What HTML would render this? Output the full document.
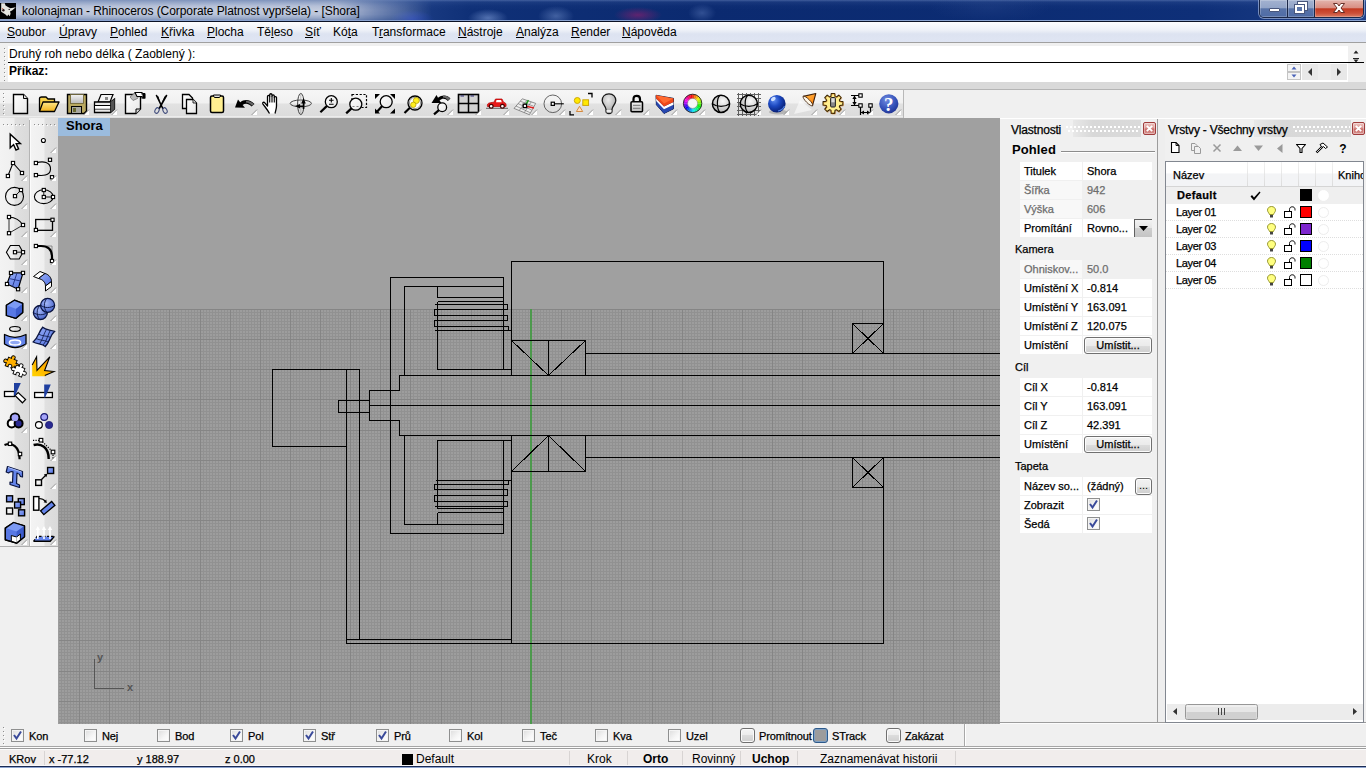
<!DOCTYPE html><html lang="cs"><head><meta charset="utf-8"><title>kolonajman - Rhinoceros</title><style>
html,body{margin:0;padding:0}
body{width:1366px;height:768px;overflow:hidden;position:relative;background:#f0f0f0;font-family:"Liberation Sans",sans-serif;font-size:12px;color:#000}
div,span,svg,i{position:absolute;box-sizing:border-box}
u{text-decoration:underline;text-underline-offset:1px}
/* title */
#titlebar{left:0;top:0;width:1366px;height:22px;background:radial-gradient(ellipse 22px 9px at 412px 19px,rgba(40,70,190,.75),rgba(40,70,190,0)),radial-gradient(ellipse 20px 9px at 488px 18px,rgba(110,140,200,.7),rgba(110,140,200,0)),radial-gradient(ellipse 18px 10px at 556px 16px,rgba(100,130,190,.6),rgba(100,130,190,0)),radial-gradient(ellipse 24px 8px at 638px 15px,rgba(150,30,110,.6),rgba(150,30,110,0)),radial-gradient(ellipse 14px 9px at 702px 13px,rgba(80,110,175,.55),rgba(80,110,175,0)),radial-gradient(ellipse 60px 14px at 990px 8px,rgba(40,70,140,.35),rgba(40,70,140,0)),linear-gradient(90deg,#3a5796 0,#1e3f86 400px,#0f3077 470px,#0b2a70 700px,#0c2c73 1000px,#0e2f78 1200px,#1f4088 1366px);overflow:hidden}
#titlebar:before{content:"";position:absolute;left:0;top:0;width:1366px;height:20px;background:linear-gradient(rgba(150,175,225,.38) 0,rgba(120,150,210,.12) 2px,rgba(90,120,190,.04) 6px,rgba(0,0,0,0) 10px)}
#titlebar:after{content:"";position:absolute;left:0;top:20px;width:1366px;height:2px;background:linear-gradient(#8aa3d0 0,#8aa3d0 50%,#0b1226 50%,#0b1226 100%)}
.tglow{left:0;top:0;width:440px;height:20px;background:linear-gradient(#7f93bc 0,#96a7c8 12%,#b5c0d8 30%,#c4ccde 50%,#bac4da 72%,#9babc9 90%,#8396bc 100%);-webkit-mask-image:linear-gradient(90deg,#000 0,#000 335px,rgba(0,0,0,.55) 375px,transparent 432px);mask-image:linear-gradient(90deg,#000 0,#000 335px,rgba(0,0,0,.55) 375px,transparent 432px)}
.appico{left:0;top:3px}
.ttext{left:22px;top:4px;font-size:12px;line-height:15px;white-space:nowrap;color:#000;letter-spacing:-0.06px}
.wbtns{left:1259px;top:0;width:105px;height:18px;border:1px solid #1a2748;border-top:none;border-radius:0 0 5px 5px;background:#1d3a7c;overflow:hidden;box-shadow:0 0 0 1px rgba(185,200,232,.6)}
.wb{top:0;height:17px}
.wmin{left:0;width:28px;background:linear-gradient(#a3b2d0 0,#93a5c8 45%,#5873a8 52%,#4f6ca6 100%);border-right:1px solid #1a2748;box-shadow:inset 0 0 0 1px rgba(255,255,255,.22)}
.wmin i{left:9px;top:8px;width:11px;height:4px;background:#fff;border:1px solid #48567c;border-radius:1px}
.wmax{left:28px;width:27px;background:linear-gradient(#a3b2d0 0,#93a5c8 45%,#5873a8 52%,#4f6ca6 100%);border-right:1px solid #1a2748;box-shadow:inset 0 0 0 1px rgba(255,255,255,.22)}
.wmax i.a{left:10px;top:2px;width:9px;height:8px;border:2px solid #fff;outline:1px solid #48567c}
.wmax i.b{left:7px;top:5px;width:9px;height:8px;border:2px solid #fff;outline:1px solid #48567c;background:#5a75aa}
.wclose{left:55px;width:49px;background:linear-gradient(#e3b5ad 0,#d98f83 45%,#c33a22 52%,#cc4f38 78%,#d97d66 100%);box-shadow:inset 0 0 0 1px rgba(255,255,255,.22)}
.wclose svg{left:17px;top:2px}
/* menu */
#menubar{left:0;top:22px;width:1366px;height:20px;background:linear-gradient(#fdfdfe 0,#eef1f8 40%,#dde3f1 60%,#dfe5f3 100%)}
.mi{top:3px;font-size:12px;line-height:15px;white-space:nowrap}
#menubar:after{content:"";position:absolute;left:0;top:20px;width:1366px;height:1px;background:#a0a0a0}
/* command */
#cmd{left:0;top:43px;width:1366px;height:39px;background:#f0f0f0}
#cmd:before{content:"";position:absolute;left:8px;top:3px;width:1340px;height:36px;background:#fff}
.cgrip{left:4px;top:5px;width:3px;height:33px;background:repeating-linear-gradient(#8e8e8e 0,#8e8e8e 1px,transparent 1px,transparent 4px) 0 0/1px 100% no-repeat,repeating-linear-gradient(transparent 0,transparent 1px,#fff 1px,#fff 2px,transparent 2px,transparent 4px) 1px 0/1px 100% no-repeat}
.chist{left:9px;top:4px;line-height:15px;white-space:nowrap;font-size:12px;letter-spacing:.03px}
.cline{left:8px;top:19px;width:1356px;height:1px;background:#000;z-index:3}
.cprompt{left:9px;top:21px;line-height:15px;font-weight:bold;font-size:12px}
.cscroll{left:1348px;top:3px;width:16px;height:17px;background:#f0f0f0}
.cspin{left:1287px;top:21px}
.carrows{left:1302px;top:21px}
#band{left:0;top:82px;width:1366px;height:8px;background:#d9d9d9;border-bottom:1px solid #b4b4b4}
/* top toolbar */
#toptb{left:0;top:90px;width:1366px;height:28px;background:#f0f0f0}
#toptb:before{content:"";position:absolute;left:0;top:0;width:903px;height:28px;background:linear-gradient(#f6f6f6 0,#f1f1f1 46%,#e2e2e2 50%,#dcdcdc 92%,#f4f4f4 96%,#cfcfcf 100%);border-right:1px solid #b8b8b8}
.tgripv{left:3px;top:3px;width:3px;height:22px;background:repeating-linear-gradient(#8e8e8e 0,#8e8e8e 1px,transparent 1px,transparent 4px) 0 0/1px 100% no-repeat,repeating-linear-gradient(transparent 0,transparent 1px,#fff 1px,#fff 2px,transparent 2px,transparent 4px) 1px 0/1px 100% no-repeat}
.ti{overflow:visible}
/* left toolbars */
#lefttb{left:0;top:118px;width:58px;height:606px;background:#f0f0f0}
.lc{top:0;height:429px;width:29px;background:linear-gradient(90deg,#f3f3f3 0,#efefef 48%,#e0e0e0 52%,#dadada 100%);border-bottom:1px solid #b0b0b0}
.lc1{left:0}.lc2{left:31px;width:27px}
.lsep{left:29px;top:2px;width:2px;height:427px;background:linear-gradient(90deg,#b4b4b4 0,#b4b4b4 50%,#fcfcfc 50%,#fcfcfc 100%)}
.lgrip{left:3px;top:6px;width:24px;height:3px;background:repeating-linear-gradient(90deg,#8e8e8e 0,#8e8e8e 1px,transparent 1px,transparent 4px) 0 0/100% 1px no-repeat,repeating-linear-gradient(90deg,transparent 0,transparent 1px,#fff 1px,#fff 2px,transparent 2px,transparent 4px) 0 1px/100% 1px no-repeat}
#lefttb:after{content:"";position:absolute;left:0;top:428px;width:58px;height:1px;background:#b0b0b0}
/* viewport */
#vp{left:58px;top:118px;width:942px;height:606px;background:#a0a0a0;overflow:hidden}
#vp svg{left:0;top:0}
.vtitle{left:0;top:0;width:52px;height:18px;background:#9bbcde;font-weight:bold;font-size:13px;line-height:16px;padding-left:8px}
.axl{font-size:11px;font-weight:bold;color:#555;line-height:12px}
/* osnap */
#osnap{left:0;top:724px;width:1366px;height:22px;background:#f0f0f0}
.ogrip{left:3px;top:3px;width:3px;height:18px;background:repeating-linear-gradient(#8e8e8e 0,#8e8e8e 1px,transparent 1px,transparent 4px) 0 0/1px 100% no-repeat,repeating-linear-gradient(transparent 0,transparent 1px,#fff 1px,#fff 2px,transparent 2px,transparent 4px) 1px 0/1px 100% no-repeat}
.cb{width:13px;height:13px;border:1px solid #8e8f8f;background:linear-gradient(135deg,#dcdcdc 0,#f6f6f6 60%,#fff 100%);box-shadow:inset 0 0 0 1px #f4f4f4}
.cb svg{left:0;top:0}
.ol{top:5px;line-height:14px;font-size:11px;white-space:nowrap;letter-spacing:-0.1px}
.pb{top:4px;width:15px;height:15px;border:1px solid #707070;border-radius:3px;background:linear-gradient(#f4f4f4 0,#ebebeb 50%,#dcdcdc 50%,#cfcfcf 100%);box-shadow:inset 0 0 0 1px #fafafa}
.pb.on{background:#9c9c9c;border-color:#2c5a8c;box-shadow:inset 0 0 0 1px #7ea0c4}
.oend{left:964px;top:0;width:2px;height:22px;background:linear-gradient(90deg,#a8a8a8 0,#a8a8a8 50%,#fff 50%,#fff 100%)}
/* status */
#status{left:0;top:746px;width:1366px;height:20px;background:#f1edec;border-top:1px solid #a6a6a6}
#status:before{content:"";position:absolute;left:0;top:0;width:1366px;height:3px;background:linear-gradient(#fdfdfd 0,#fdfdfd 33.3%,#9c9c9c 33.3%,#9c9c9c 66.6%,#fbfbfb 66.6%,#fbfbfb 100%)}
.sp{top:5px;line-height:14px;font-size:12px;white-space:nowrap}
.sp.b{font-weight:bold}.sp.n{font-size:11px}
.ssep{top:4px;width:1px;height:15px;background:#d8d4d3}
.sblk{left:402px;top:7px;width:11px;height:12px;background:#000}
#botline{left:0;top:765px;width:1366px;height:3px;background:linear-gradient(#faf8f8 0,#faf8f8 33.3%,#1b2b54 33.3%,#1b2b54 66.6%,#8ea4cf 66.6%,#8ea4cf 100%)}
/* panels */
#props{left:1000px;top:118px;width:158px;height:606px;background:#f0f0f0;box-shadow:inset 0 1px 0 #fff,inset 0 -1px 0 #fcfcfc,inset 0 -2px 0 #9c9c9c,inset -1px 0 0 #9c9c9c;font-size:11px}
.ptitle{left:11px;top:5px;z-index:2;line-height:14px;font-size:12px;white-space:nowrap;letter-spacing:-0.2px}
.pgripbg{top:2px;height:17px;background:linear-gradient(90deg,#e8e8e8,#d8d8d8 30%,#dadada)}
.pgrip{top:8px;height:7px;background:repeating-linear-gradient(90deg,#fff 0,#fff 2px,transparent 2px,transparent 4px) 0 0/100% 2px no-repeat,repeating-linear-gradient(90deg,transparent 0,transparent 2px,#fff 2px,#fff 4px) 0 4px/100% 2px no-repeat}
.pclose{top:4px;width:13px;height:13px;border:1px solid #a03c3c;border-radius:2px;background:linear-gradient(#eec4c0 0,#dc9a96 45%,#c96a66 55%,#d89490 100%);box-shadow:inset 0 0 0 1px rgba(255,255,255,.35)}
.pclose svg{left:2px;top:2px}
.phead{left:12px;top:24px;font-weight:bold;font-size:13px;line-height:16px;letter-spacing:.1px}
.pheadline{left:61px;top:33px;width:94px;height:2px;background:linear-gradient(#8c8c8c 0,#8c8c8c 50%,#fff 50%,#fff 100%)}
.gname{left:15px;line-height:19px;font-size:11px;white-space:nowrap}
.prow{left:20px;width:132px;height:18px}
.pl{left:0;top:0;width:62px;height:18px;background:#fff;padding-left:4px;line-height:18px;white-space:nowrap;overflow:hidden}
.pv{left:63px;top:0;width:69px;height:18px;background:#fff;white-space:nowrap}
.pvt{left:4px;top:0;line-height:18px}
.prow.dis .pl{background:#f8f8f8;color:#6d6d6d}
.prow.dis .pv{background:#f0f0f0;color:#6d6d6d}
.dd{left:51px;top:0;width:18px;height:18px;border-top:1px solid #606060;border-left:1px solid #606060;background:linear-gradient(#f2f2f2 0,#e4e4e4 50%,#cfcfcf 50%,#c4c4c4 100%)}
.dd svg{left:4px;top:6px}
.pbtn{left:1px;top:1px;width:68px;height:17px;border:1px solid #707070;border-radius:3px;background:linear-gradient(#f2f2f2 0,#ebebeb 50%,#dddddd 50%,#cfcfcf 100%);box-shadow:inset 0 0 0 1px #fcfcfc;text-align:center;line-height:15px}
.pdots{left:52px;top:1px;width:17px;height:17px;border:1px solid #707070;border-radius:3px;background:linear-gradient(#f2f2f2 0,#ebebeb 50%,#dddddd 50%,#cfcfcf 100%);box-shadow:inset 0 0 0 1px #fcfcfc;text-align:center;line-height:13px}
#split{left:1158px;top:118px;width:7px;height:606px;background:#eeeeee;box-shadow:inset 0 1px 0 #fff,inset 0 -1px 0 #fcfcfc,inset 0 -2px 0 #9c9c9c}
#layers{left:1165px;top:118px;width:201px;height:606px;background:#f0f0f0;box-shadow:inset 0 1px 0 #fff,inset 0 -1px 0 #fcfcfc,inset 0 -2px 0 #9c9c9c;font-size:11px}
.ltb{left:0;top:22px}
.lbox{left:0;top:43px;width:199px;height:562px;border:1px solid #828790;background:#fff;overflow:hidden}
.lhdr{left:0;top:0;width:197px;height:25px;background:linear-gradient(#fff 0,#fff 45%,#f3f4f6 50%,#f3f4f6 100%);border-bottom:1px solid #d5d5d5}
.hsep{top:0;width:1px;height:24px;background:linear-gradient(#f2f2f2,#dcdcdc)}
.hl{top:6px;line-height:14px;white-space:nowrap}
.lrow{left:0;width:197px;height:17px;border-bottom:1px dotted #dedede}
.lrow.cur{background:#efefef;font-weight:bold;border-bottom:none}
.ln{left:10px;top:1px;line-height:15px;white-space:nowrap;letter-spacing:-0.35px}
.lrow.cur .ln{left:11px;letter-spacing:.35px}
.lck{left:84px;top:4px}
.lbulb{left:101px;top:2px}
.llock{left:118px;top:2px}
.sw{left:134px;top:2px;width:12px;height:12px;border:1px solid #000}
.mat{left:152px;top:3px;width:11px;height:11px;border-radius:6px;background:#fff;border:1px solid #ededed}
.mat.cur{border-color:#fff}
.hscroll{left:1px;top:542px;width:196px;height:16px;background:#ececec}
.ol,.pl,.pvt,.ln,.hl,.gname,.sp.n,.pbtn,.ptitle{-webkit-text-stroke:0.25px currentColor}

</style></head><body>
<svg width="0" height="0" style="position:absolute"><defs>
<linearGradient id="gFold" x1="0" y1="0" x2="0" y2="1"><stop offset="0" stop-color="#ffe88a"/><stop offset="1" stop-color="#f2b21c"/></linearGradient>
<linearGradient id="gGray" x1="0" y1="0" x2="0" y2="1"><stop offset="0" stop-color="#f4f4f4"/><stop offset="1" stop-color="#b8b8b8"/></linearGradient>
<linearGradient id="gDoc" x1="0" y1="0" x2="1" y2="1"><stop offset="0" stop-color="#fff"/><stop offset="1" stop-color="#e6e6e6"/></linearGradient>
<radialGradient id="gSph" cx="0.6" cy="0.35" r="0.7"><stop offset="0" stop-color="#fafafa"/><stop offset="1" stop-color="#b4b4b4"/></radialGradient>
<radialGradient id="gBulb" cx="0.45" cy="0.3" r="0.65"><stop offset="0" stop-color="#ececec"/><stop offset="0.6" stop-color="#c4c4c4"/><stop offset="1" stop-color="#9a9a9a"/></radialGradient>
<radialGradient id="gBall" cx="0.35" cy="0.3" r="0.75"><stop offset="0" stop-color="#5f8cf0"/><stop offset="0.45" stop-color="#1c48c0"/><stop offset="1" stop-color="#04186a"/></radialGradient>
<radialGradient id="gHelp" cx="0.4" cy="0.3" r="0.8"><stop offset="0" stop-color="#6f8be0"/><stop offset="0.6" stop-color="#3450b8"/><stop offset="1" stop-color="#1c2c88"/></radialGradient>
<radialGradient id="gBS" cx="0.4" cy="0.35" r="0.7"><stop offset="0" stop-color="#a4b8f8"/><stop offset="1" stop-color="#4460c8"/></radialGradient>
<linearGradient id="gBlue" x1="0" y1="0" x2="1" y2="1"><stop offset="0" stop-color="#9ab0f8"/><stop offset="1" stop-color="#5070e0"/></linearGradient>
<linearGradient id="gExp" x1="1" y1="0" x2="0" y2="1"><stop offset="0" stop-color="#ff9000"/><stop offset="1" stop-color="#ffd400"/></linearGradient>
<linearGradient id="gCone" x1="0" y1="0" x2="1" y2="1"><stop offset="0" stop-color="#ffc050"/><stop offset="1" stop-color="#ff7800"/></linearGradient>
</defs></svg>
<div id="titlebar"><div class="tglow"></div>
<svg class="appico" width="16" height="16" viewBox="0 0 16 16"><rect width="16" height="16" fill="#000"/><path d="M1.2 0.3L4.8 0.3L5.5 2.5L8 4L10.5 5.2L15.8 4.2L12 7.5L10 8.5L10.6 10.5L9.8 13.2L8.3 11.5L7.2 13.2L5.8 11.8L4 10.5L1.2 8.8Z" fill="#e6e6e0"/><circle cx="3.4" cy="7.2" r="1.2" fill="#2a1616"/><circle cx="2.6" cy="5.6" r="0.7" fill="#d06a50"/><circle cx="9.2" cy="6.4" r="0.7" fill="#1a1010"/></svg>
<span class="ttext">kolonajman - Rhinoceros (Corporate Platnost vypršela) - [Shora]</span>
<div class="wbtns"><div class="wb wmin"><i></i></div><div class="wb wmax"><i class="a"></i><i class="b"></i></div><div class="wb wclose"><svg width="14" height="12" viewBox="0 0 14 12"><path d="M1.5 1.5 L5.2 1.5 L7 4 L8.8 1.5 L12.5 1.5 L9 6 L12.5 10.5 L8.8 10.5 L7 8 L5.2 10.5 L1.5 10.5 L5 6 Z" fill="#fff" stroke="#5a2018" stroke-width="0.9"/></svg></div></div>
</div>
<div id="menubar">
<span class="mi" style="left:7px"><u>S</u>oubor</span>
<span class="mi" style="left:59px"><u>Ú</u>pravy</span>
<span class="mi" style="left:110px"><u>P</u>ohled</span>
<span class="mi" style="left:161px"><u>K</u>řivka</span>
<span class="mi" style="left:207px"><u>P</u>locha</span>
<span class="mi" style="left:257px">Tě<u>l</u>eso</span>
<span class="mi" style="left:305px"><u>S</u>íť</span>
<span class="mi" style="left:333px">Kó<u>t</u>a</span>
<span class="mi" style="left:372px">T<u>r</u>ansformace</span>
<span class="mi" style="left:458px"><u>N</u>ástroje</span>
<span class="mi" style="left:516px"><u>A</u>nalýza</span>
<span class="mi" style="left:571px"><u>R</u>ender</span>
<span class="mi" style="left:622px"><u>N</u>ápověda</span>
</div>
<div id="cmd"><div class="cgrip"></div><div class="chist">Druhý roh nebo délka ( Zaoblený ):</div><div class="cline"></div><div class="cprompt">Příkaz:</div>
<div class="cscroll"><svg width="16" height="17" viewBox="0 3 16 17"><path d="M5.5 10.5 L8 7.5 L10.5 10.5Z" fill="#222"/><path d="M5.5 16.5 L10.5 16.5 L8 19.5Z" fill="#222"/><rect x="5" y="15" width="6" height="1" fill="#222"/></svg></div>
<div class="cspin"><svg width="14" height="16" viewBox="0 0 14 16"><rect x="0.5" y="0.5" width="13" height="7" fill="#f4f4f4" stroke="#c4c4c4"/><rect x="0.5" y="8.5" width="13" height="7" fill="#f4f4f4" stroke="#c4c4c4"/><path d="M4.5 5.5 L7 2.5 L9.5 5.5Z" fill="#4a63b8"/><path d="M4.5 10.5 L9.5 10.5 L7 13.5Z" fill="#4a63b8"/></svg></div>
<div class="carrows"><svg width="46" height="16" viewBox="0 0 46 16"><rect x="0" y="0" width="45" height="16" fill="#e8e8e8"/><rect x="16" y="0" width="13" height="16" fill="#ededed"/><path d="M10 4 L6 8 L10 12Z" fill="#333"/><path d="M35 4 L39 8 L35 12Z" fill="#333"/></svg></div>
</div>
<div id="band"></div>
<div id="toptb"><div class="tgripv"></div>
<svg class="ti" style="left:8px;top:2px" width="24" height="24" viewBox="0 0 24 24"><path d="M5.5 2.5H15.5L19.5 6.5V21.5H5.5Z" fill="url(#gDoc)" stroke="#000" stroke-width="1.4"/><path d="M15.5 2.5V6.5H19.5" fill="#ddd" stroke="#000" stroke-width="1"/></svg>
<svg class="ti" style="left:36px;top:2px" width="24" height="24" viewBox="0 0 24 24"><path d="M3.5 19V6.5C3.5 5.5 4.5 5 5.5 5H10L12 7H18.5V10" fill="#f8d24a" stroke="#000" stroke-width="1.3"/><path d="M3.5 19.5L7 10H23L18.5 19.5Z" fill="url(#gFold)" stroke="#000" stroke-width="1.3" stroke-linejoin="round"/></svg>
<svg class="ti" style="left:64px;top:2px" width="24" height="24" viewBox="0 0 24 24"><path d="M3.5 2.5H22.5V19L20 21.5H3.5Z" fill="#b8a860" stroke="#000" stroke-width="1.4"/><rect x="6.5" y="2.5" width="13" height="9" fill="url(#gGray)" stroke="#6a6030" stroke-width="0.8"/><rect x="7.5" y="14.5" width="10" height="7" fill="#a8a8a0" stroke="#000" stroke-width="1"/><rect x="9" y="16" width="3" height="4" fill="#6a6a30"/></svg>
<svg class="ti" style="left:84px;top:20px" width="5" height="5" viewBox="0 0 5 5"><path d="M5 0 L5 5 L0 5Z" fill="#fff"/><path d="M5 -0.4 L-0.4 5" stroke="#777" stroke-width="0.7" fill="none"/></svg>
<svg class="ti" style="left:92px;top:2px" width="24" height="24" viewBox="0 0 24 24"><path d="M6 10L9 2.5H21L18 10Z" fill="#f4f4f4" stroke="#000" stroke-width="1.2"/><rect x="13" y="5" width="3" height="3" fill="#888"/><path d="M2.5 10H18.5L22.5 7V17L18.5 20.5H2.5Z" fill="#e8e8e8" stroke="#000" stroke-width="1.3"/><path d="M18.5 10V20.5" stroke="#000"/><path d="M18.5 10L22.5 7V17L18.5 20.5Z" fill="#555"/><path d="M2.5 13.5H18.5M2.5 17H18.5" stroke="#000" stroke-width="1.2"/><rect x="3" y="14" width="15" height="2.6" fill="#fff"/></svg>
<svg class="ti" style="left:112px;top:20px" width="5" height="5" viewBox="0 0 5 5"><path d="M5 0 L5 5 L0 5Z" fill="#fff"/><path d="M5 -0.4 L-0.4 5" stroke="#777" stroke-width="0.7" fill="none"/></svg>
<svg class="ti" style="left:120px;top:2px" width="24" height="24" viewBox="0 0 24 24"><path d="M5.5 2.5H20.5V17L16 21.5H5.5Z" fill="url(#gDoc)" stroke="#000" stroke-width="1.4"/><path d="M20.5 17H16V21.5" fill="#ddd" stroke="#000"/><path d="M10 5L14 1.5L17 1L20 1.5L17.5 6.5L13 8.5Z" fill="#bbb" stroke="#555" stroke-width="0.6"/><path d="M15 0.5H22V2H25V6H22V4.5H17Z" fill="#fff" stroke="#000" stroke-width="1.1"/><rect x="22.5" y="1" width="2.5" height="5.5" fill="#000"/></svg>
<svg class="ti" style="left:148px;top:2px" width="24" height="24" viewBox="0 0 24 24"><path d="M8.5 3.5L14.8 16.5M18.5 3.5L11.2 16.5" stroke="#000" stroke-width="1.6" stroke-linecap="round"/><path d="M8.5 3.5L12.5 11L10.5 4.5ZM18.5 3.5L13.5 11L16.5 4.5Z" fill="#000"/><ellipse cx="9" cy="18.5" rx="1.9" ry="3" transform="rotate(28 9 18.5)" fill="none" stroke="#3a4678" stroke-width="1"/><ellipse cx="17" cy="18.5" rx="1.9" ry="3" transform="rotate(-28 17 18.5)" fill="none" stroke="#3a4678" stroke-width="1"/></svg>
<svg class="ti" style="left:176px;top:2px" width="24" height="24" viewBox="0 0 24 24"><path d="M6.5 2.5H13L16.5 6V16.5H6.5Z" fill="url(#gDoc)" stroke="#000" stroke-width="1.3"/><path d="M10.5 7.5H17L20.5 11V21.5H10.5Z" fill="url(#gDoc)" stroke="#000" stroke-width="1.3"/><path d="M17 7.5V11H20.5" fill="#ddd" stroke="#000" stroke-width="0.8"/></svg>
<svg class="ti" style="left:204px;top:2px" width="24" height="24" viewBox="0 0 24 24"><rect x="6.5" y="4" width="13" height="16.5" rx="1.5" fill="#ffef90" stroke="#000" stroke-width="1.5"/><path d="M9.5 4V3H16.5V4L15.5 5.5H10.5Z" fill="#e0e0e0" stroke="#000" stroke-width="1"/></svg>
<svg class="ti" style="left:232px;top:2px" width="24" height="24" viewBox="0 0 24 24"><path d="M3 15.5L6 7.5L8.2 10.2C12 7 18 7 22.5 12L19.5 14.5C16.5 11 13 11 10.6 13L13 15.8Z" fill="#000"/><path d="M14 8.8C17 8.8 20 10 22 12.2L20 13.8C18.5 12 16 10.8 14 10.6Z" fill="#666"/></svg>
<svg class="ti" style="left:252px;top:20px" width="5" height="5" viewBox="0 0 5 5"><path d="M5 0 L5 5 L0 5Z" fill="#fff"/><path d="M5 -0.4 L-0.4 5" stroke="#777" stroke-width="0.7" fill="none"/></svg>
<svg class="ti" style="left:260px;top:2px" width="24" height="24" viewBox="0 0 24 24"><path d="M9.5 21.5C7 17 5 15 2.8 11.8C2.2 10.6 3.8 9.6 4.8 10.8L7.5 14V4.5C7.5 3 9.7 3 9.7 4.5V3C9.7 1.3 12 1.3 12 3V4C12 2.5 14.3 2.5 14.3 4V5.5C14.3 4.2 16.5 4.2 16.5 5.5V14C16.5 17 15.5 19 15 21.5" fill="#fff" stroke="#000" stroke-width="1.3" stroke-linejoin="round"/><path d="M9.7 4.5V10.5M12 4V10.5M14.3 5.5V10.5" stroke="#000" stroke-width="1.1"/></svg>
<svg class="ti" style="left:288px;top:2px" width="24" height="24" viewBox="0 0 24 24"><ellipse cx="12.8" cy="11.4" rx="10.6" ry="3.4" fill="none" stroke="#333" stroke-width="0.9"/><ellipse cx="12.8" cy="12" rx="3.2" ry="10.6" fill="none" stroke="#333" stroke-width="0.9"/><path d="M12.8 1.5V22" stroke="#999" stroke-width="0.6"/><path d="M15.5 6L17.8 11.5H13.2Z" fill="#000"/><path d="M15.5 11V17" stroke="#000" stroke-width="1.6"/><path d="M7 14L12 12V16.5Z" fill="#000"/><path d="M11 14.3H16" stroke="#000" stroke-width="1.6"/></svg>
<svg class="ti" style="left:316px;top:2px" width="24" height="24" viewBox="0 0 24 24"><path d="M11.0 13.9L4.4 20.2" stroke="#000" stroke-width="2.2" stroke-linecap="butt"/><circle cx="15.3" cy="9.7" r="6.0" fill="url(#gDoc)" stroke="#000" stroke-width="1.3"/><path d="M15.3 6V10.5M13 8.2H17.6M13 12.3H17.6" stroke="#000" stroke-width="1.1"/></svg>
<svg class="ti" style="left:344px;top:2px" width="24" height="24" viewBox="0 0 24 24"><rect x="8" y="2.5" width="14.5" height="13" fill="none" stroke="#000" stroke-width="1.2" stroke-dasharray="2.2 1.6"/><path d="M7.5 16.4L2.2 21.4" stroke="#000" stroke-width="2.2" stroke-linecap="butt"/><circle cx="11.8" cy="12.2" r="6.0" fill="url(#gDoc)" stroke="#000" stroke-width="1.3"/><path d="M8.5 14.5H10.5M12.5 14.5H14.5" stroke="#777" stroke-width="0.9"/></svg>
<svg class="ti" style="left:372px;top:2px" width="24" height="24" viewBox="0 0 24 24"><path d="M3 2H8L3 7ZM23 2V7L18 2ZM3 21.5V16.5L8 21.5ZM23 21.5H18L23 16.5Z" fill="#000"/><path d="M10.2 14.1L4.6 20.2" stroke="#000" stroke-width="2.2" stroke-linecap="butt"/><circle cx="14.2" cy="9.7" r="6.0" fill="url(#gDoc)" stroke="#000" stroke-width="1.3"/></svg>
<svg class="ti" style="left:400px;top:2px" width="24" height="24" viewBox="0 0 24 24"><path d="M9.9 15.8L4.5 21.0" stroke="#000" stroke-width="2.2" stroke-linecap="butt"/><circle cx="15.0" cy="11.0" r="7.0" fill="#fff" stroke="#000" stroke-width="1.3"/><circle cx="15" cy="11" r="5.6" fill="none" stroke="#555" stroke-width="0.6"/><circle cx="16.3" cy="8.6" r="3" fill="#ffef20" stroke="#b09800" stroke-width="0.7"/><circle cx="13.3" cy="12.8" r="2.7" fill="#ffef20" stroke="#b09800" stroke-width="0.7"/></svg>
<svg class="ti" style="left:428px;top:2px" width="24" height="24" viewBox="0 0 24 24"><path d="M3.5 11L8.5 3L10 5.8C14 2.5 19.5 2.8 22.5 6.5L19.8 9C17.5 6 14 6 11.6 8.4L13.5 11Z" fill="#000"/><path d="M15 3.6C18 3.6 20.6 4.8 22 6.6L20 8.4C18.8 6.6 17 5.8 15 5.6Z" fill="#666"/><path d="M10.9 18.1L6.0 22.3" stroke="#000" stroke-width="2.2" stroke-linecap="butt"/><circle cx="14.2" cy="15.2" r="4.4" fill="url(#gDoc)" stroke="#000" stroke-width="1.3"/></svg>
<svg class="ti" style="left:448px;top:20px" width="5" height="5" viewBox="0 0 5 5"><path d="M5 0 L5 5 L0 5Z" fill="#fff"/><path d="M5 -0.4 L-0.4 5" stroke="#777" stroke-width="0.7" fill="none"/></svg>
<svg class="ti" style="left:456px;top:2px" width="24" height="24" viewBox="0 0 24 24"><rect x="2.5" y="2.5" width="20" height="18" fill="#d2d2d2" stroke="#000" stroke-width="1.6"/><path d="M12.5 2.5V20.5M2.5 11.5H22.5" stroke="#000" stroke-width="1.5"/><path d="M4.5 4H8M14.5 4H18" stroke="#000060" stroke-width="0.8"/></svg>
<svg class="ti" style="left:476px;top:20px" width="5" height="5" viewBox="0 0 5 5"><path d="M5 0 L5 5 L0 5Z" fill="#fff"/><path d="M5 -0.4 L-0.4 5" stroke="#777" stroke-width="0.7" fill="none"/></svg>
<svg class="ti" style="left:484px;top:2px" width="24" height="24" viewBox="0 0 24 24"><path d="M2 16.3H24" stroke="#555" stroke-width="0.9"/><path d="M3.5 14.5C3 11.5 4 10.8 10 10.2L11.5 7H18L19.5 10.2C21.5 10.6 22.5 11.5 22 14.5Z" fill="#e81818" stroke="#b00000" stroke-width="0.7"/><path d="M12.5 8H17L17.8 10.2H12Z" fill="#fff"/><circle cx="7.2" cy="14.3" r="1.9" fill="#fff" stroke="#400" stroke-width="1.2"/><circle cx="18.4" cy="14.3" r="1.9" fill="#fff" stroke="#400" stroke-width="1.2"/></svg>
<svg class="ti" style="left:504px;top:20px" width="5" height="5" viewBox="0 0 5 5"><path d="M5 0 L5 5 L0 5Z" fill="#fff"/><path d="M5 -0.4 L-0.4 5" stroke="#777" stroke-width="0.7" fill="none"/></svg>
<svg class="ti" style="left:512px;top:2px" width="24" height="24" viewBox="0 0 24 24"><path d="M10.3 6.8L23.7 11.4L17.4 22.7L2 16.4Z" fill="#eee" stroke="#666" stroke-width="0.7"/><path d="M8.2 9.2L21.6 14.2M6.1 11.6L19.5 17.9M4 14L17.9 20.6M14.8 8.3L7.2 18.5M19.2 9.9L12.3 20.6" stroke="#666" stroke-width="0.6"/><path d="M13 14L16.5 8.2" stroke="#20a020" stroke-width="1.6"/><path d="M13 14L22 16" stroke="#e02020" stroke-width="1.6"/><rect x="11.2" y="12.2" width="3.4" height="3.4" fill="#fff" stroke="#000" stroke-width="1.3"/></svg>
<svg class="ti" style="left:532px;top:20px" width="5" height="5" viewBox="0 0 5 5"><path d="M5 0 L5 5 L0 5Z" fill="#fff"/><path d="M5 -0.4 L-0.4 5" stroke="#777" stroke-width="0.7" fill="none"/></svg>
<svg class="ti" style="left:540px;top:2px" width="24" height="24" viewBox="0 0 24 24"><circle cx="12.8" cy="11.8" r="8.8" fill="none" stroke="#555" stroke-width="0.9"/><path d="M12.8 11.8H23.8" stroke="#000" stroke-width="1.1"/><rect x="11.2" y="10.2" width="3.2" height="3.2" fill="#fff" stroke="#000" stroke-width="1.2"/></svg>
<svg class="ti" style="left:560px;top:20px" width="5" height="5" viewBox="0 0 5 5"><path d="M5 0 L5 5 L0 5Z" fill="#fff"/><path d="M5 -0.4 L-0.4 5" stroke="#777" stroke-width="0.7" fill="none"/></svg>
<svg class="ti" style="left:568px;top:2px" width="24" height="24" viewBox="0 0 24 24"><path d="M20 1.5H24V5.5M2 19V22.8H6" fill="none" stroke="#000" stroke-width="1.3"/><circle cx="9.3" cy="8.5" r="3" fill="#ffe800" stroke="#c8a000" stroke-width="0.9"/><rect x="14.8" y="7.8" width="5.8" height="5.6" fill="#ffe800" stroke="#c8a000" stroke-width="0.9"/><path d="M8.4 19.5H14.7L11.5 14.3Z" fill="#ffe0c0" stroke="#d08030" stroke-width="0.9"/></svg>
<svg class="ti" style="left:588px;top:20px" width="5" height="5" viewBox="0 0 5 5"><path d="M5 0 L5 5 L0 5Z" fill="#fff"/><path d="M5 -0.4 L-0.4 5" stroke="#777" stroke-width="0.7" fill="none"/></svg>
<svg class="ti" style="left:596px;top:2px" width="24" height="24" viewBox="0 0 24 24"><path d="M13 1.8C8.5 1.8 6.2 5 6.2 8.5C6.2 12 9.6 13.5 10 17.5V19C10 20.8 11.5 21.5 13 21.5C14.5 21.5 16 20.8 16 19V17.5C16.4 13.5 19.8 12 19.8 8.5C19.8 5 17.5 1.8 13 1.8Z" fill="url(#gBulb)" stroke="#1a1a1a" stroke-width="1.3"/><path d="M10.5 18H15.5V20.5H10.5Z" fill="#eee"/></svg>
<svg class="ti" style="left:616px;top:20px" width="5" height="5" viewBox="0 0 5 5"><path d="M5 0 L5 5 L0 5Z" fill="#fff"/><path d="M5 -0.4 L-0.4 5" stroke="#777" stroke-width="0.7" fill="none"/></svg>
<svg class="ti" style="left:624px;top:2px" width="24" height="24" viewBox="0 0 24 24"><path d="M9.5 10V7C9.5 4.5 11 3.8 12.8 3.8C14.6 3.8 16 4.5 16 7V10" fill="none" stroke="#000" stroke-width="2.2"/><rect x="7" y="9.8" width="11.5" height="10" rx="1" fill="url(#gGray)" stroke="#000" stroke-width="1.5"/><path d="M9 13.3H16.5M9 16.3H16.5" stroke="#888" stroke-width="1.3"/></svg>
<svg class="ti" style="left:644px;top:20px" width="5" height="5" viewBox="0 0 5 5"><path d="M5 0 L5 5 L0 5Z" fill="#fff"/><path d="M5 -0.4 L-0.4 5" stroke="#777" stroke-width="0.7" fill="none"/></svg>
<svg class="ti" style="left:652px;top:2px" width="24" height="24" viewBox="0 0 24 24"><path d="M4 3.3L21.5 6.4V16.8L12 21.4L4.4 12.7Z" fill="#18308a" stroke="#101840" stroke-width="1"/><path d="M4.2 8.5L12 17L21.5 12.5V16.8L12 21.4L4.4 12.7Z" fill="#2848b0"/><path d="M4.1 6.5L12 14.5L21.5 10V12.8L12 17.3L4.2 9Z" fill="#fff"/><path d="M4 3.3L21.5 6.4V10L12 14.5L4.1 6.5Z" fill="#f04818"/><path d="M4 3.3L21.5 6.4L12 11.5Z" fill="#ff6a30"/></svg>
<svg class="ti" style="left:672px;top:20px" width="5" height="5" viewBox="0 0 5 5"><path d="M5 0 L5 5 L0 5Z" fill="#fff"/><path d="M5 -0.4 L-0.4 5" stroke="#777" stroke-width="0.7" fill="none"/></svg>
<svg class="ti" style="left:680px;top:2px" width="24" height="24" viewBox="0 0 24 24"><g transform="translate(12.6 11.4)"><path d="M0 0L0.00 -9.20A9.2 9.2 0 0 1 2.56 -8.84Z" fill="#f2440c"/><path d="M0 0L2.38 -8.89A9.2 9.2 0 0 1 4.76 -7.87Z" fill="#f27e0c"/><path d="M0 0L4.60 -7.97A9.2 9.2 0 0 1 6.63 -6.37Z" fill="#f2b70c"/><path d="M0 0L6.51 -6.51A9.2 9.2 0 0 1 8.06 -4.44Z" fill="#f2f10c"/><path d="M0 0L7.97 -4.60A9.2 9.2 0 0 1 8.93 -2.20Z" fill="#b9f20c"/><path d="M0 0L8.89 -2.38A9.2 9.2 0 0 1 9.20 0.18Z" fill="#80f20c"/><path d="M0 0L9.20 0.00A9.2 9.2 0 0 1 8.84 2.56Z" fill="#46f20c"/><path d="M0 0L8.89 2.38A9.2 9.2 0 0 1 7.87 4.76Z" fill="#0df20c"/><path d="M0 0L7.97 4.60A9.2 9.2 0 0 1 6.37 6.63Z" fill="#0cf244"/><path d="M0 0L6.51 6.51A9.2 9.2 0 0 1 4.44 8.06Z" fill="#0cf27e"/><path d="M0 0L4.60 7.97A9.2 9.2 0 0 1 2.20 8.93Z" fill="#0cf2b7"/><path d="M0 0L2.38 8.89A9.2 9.2 0 0 1 -0.18 9.20Z" fill="#0cf2f1"/><path d="M0 0L0.00 9.20A9.2 9.2 0 0 1 -2.56 8.84Z" fill="#0cb9f2"/><path d="M0 0L-2.38 8.89A9.2 9.2 0 0 1 -4.76 7.87Z" fill="#0c80f2"/><path d="M0 0L-4.60 7.97A9.2 9.2 0 0 1 -6.63 6.37Z" fill="#0c46f2"/><path d="M0 0L-6.51 6.51A9.2 9.2 0 0 1 -8.06 4.44Z" fill="#0c0df2"/><path d="M0 0L-7.97 4.60A9.2 9.2 0 0 1 -8.93 2.20Z" fill="#440cf2"/><path d="M0 0L-8.89 2.38A9.2 9.2 0 0 1 -9.20 -0.18Z" fill="#7e0cf2"/><path d="M0 0L-9.20 0.00A9.2 9.2 0 0 1 -8.84 -2.56Z" fill="#b70cf2"/><path d="M0 0L-8.89 -2.38A9.2 9.2 0 0 1 -7.87 -4.76Z" fill="#f10cf2"/><path d="M0 0L-7.97 -4.60A9.2 9.2 0 0 1 -6.37 -6.63Z" fill="#f20cb9"/><path d="M0 0L-6.51 -6.51A9.2 9.2 0 0 1 -4.44 -8.06Z" fill="#f20c80"/><path d="M0 0L-4.60 -7.97A9.2 9.2 0 0 1 -2.20 -8.93Z" fill="#f20c46"/><path d="M0 0L-2.38 -8.89A9.2 9.2 0 0 1 0.18 -9.20Z" fill="#f20c0d"/><circle r="9.2" fill="none" stroke="#222" stroke-width="0.9"/><circle r="5" fill="#f6f6f6" stroke="#777" stroke-width="0.5"/></g></svg>
<svg class="ti" style="left:700px;top:20px" width="5" height="5" viewBox="0 0 5 5"><path d="M5 0 L5 5 L0 5Z" fill="#fff"/><path d="M5 -0.4 L-0.4 5" stroke="#777" stroke-width="0.7" fill="none"/></svg>
<svg class="ti" style="left:708px;top:2px" width="24" height="24" viewBox="0 0 24 24"><circle cx="13" cy="11.8" r="8.6" fill="url(#gSph)" stroke="#000" stroke-width="1.5"/><path d="M4.4 11.8C9 15.3 17 15.3 21.6 11.8" fill="none" stroke="#000" stroke-width="1.2"/><path d="M12 3.2C8.5 6 8.5 17 12 20.4" fill="none" stroke="#000" stroke-width="1.2"/></svg>
<svg class="ti" style="left:736px;top:2px" width="24" height="24" viewBox="0 0 24 24"><path d="M2.5 0.5V23.5M6.5 0.5V23.5M10.5 0.5V23.5M14.5 0.5V23.5M18.5 0.5V23.5M22.5 0.5V23.5M1 2.5H24.5M1 6.5H24.5M1 10.5H24.5M1 14.5H24.5M1 18.5H24.5M1 22.5H24.5" stroke="#4a4a4a" stroke-width="1" shape-rendering="crispEdges" opacity="0.85"/><circle cx="12.8" cy="11.8" r="8.6" fill="url(#gSph)" stroke="#000" stroke-width="1.5"/><path d="M4.200000000000001 11.8C8.8 15.3 16.8 15.3 21.4 11.8" fill="none" stroke="#000" stroke-width="1.2"/><path d="M11.8 3.2C8.3 6 8.3 17 11.8 20.4" fill="none" stroke="#000" stroke-width="1.2"/></svg>
<svg class="ti" style="left:756px;top:20px" width="5" height="5" viewBox="0 0 5 5"><path d="M5 0 L5 5 L0 5Z" fill="#fff"/><path d="M5 -0.4 L-0.4 5" stroke="#777" stroke-width="0.7" fill="none"/></svg>
<svg class="ti" style="left:764px;top:2px" width="24" height="24" viewBox="0 0 24 24"><ellipse cx="14" cy="20" rx="9" ry="2.6" fill="#9a9a9a" opacity="0.6"/><circle cx="12.8" cy="11.8" r="8.8" fill="url(#gBall)"/><ellipse cx="9.3" cy="7" rx="2.6" ry="1.8" fill="#cfe0ff" transform="rotate(-35 9.3 7)"/><path d="M14 19C17 18.5 19.5 16.5 20.5 14" stroke="#5080e0" stroke-width="1.2" fill="none"/></svg>
<svg class="ti" style="left:784px;top:20px" width="5" height="5" viewBox="0 0 5 5"><path d="M5 0 L5 5 L0 5Z" fill="#fff"/><path d="M5 -0.4 L-0.4 5" stroke="#777" stroke-width="0.7" fill="none"/></svg>
<svg class="ti" style="left:792px;top:2px" width="24" height="24" viewBox="0 0 24 24"><path d="M20 18L2 22L8 8Z" fill="#fff" opacity="0.55"/><path d="M23.8 1.5L11.3 4.4L20.5 13.6Z" fill="url(#gCone)" stroke="#40200a" stroke-width="1.1" stroke-linejoin="round"/><ellipse cx="15.9" cy="9" rx="6.6" ry="1.8" transform="rotate(45 15.9 9)" fill="#fff8e8" stroke="#40200a" stroke-width="0.8"/></svg>
<svg class="ti" style="left:812px;top:20px" width="5" height="5" viewBox="0 0 5 5"><path d="M5 0 L5 5 L0 5Z" fill="#fff"/><path d="M5 -0.4 L-0.4 5" stroke="#777" stroke-width="0.7" fill="none"/></svg>
<svg class="ti" style="left:820px;top:2px" width="24" height="24" viewBox="0 0 24 24"><path d="M22.9 9.7L22.9 13.1L19.9 13.5L19.4 14.8L21.2 17.2L18.8 19.6L16.4 17.8L15.1 18.3L14.7 21.3L11.3 21.3L10.9 18.3L9.6 17.8L7.2 19.6L4.8 17.2L6.6 14.8L6.1 13.5L3.1 13.1L3.1 9.7L6.1 9.3L6.6 8.0L4.8 5.6L7.2 3.2L9.6 5.0L10.9 4.5L11.3 1.5L14.7 1.5L15.1 4.5L16.4 5.0L18.8 3.2L21.2 5.6L19.4 8.0L19.9 9.3Z" fill="#ffef90" stroke="#302000" stroke-width="1.2" stroke-linejoin="round"/><path d="M22.9 9.7L22.9 13.1L19.9 13.5L19.4 14.8L21.2 17.2L18.8 19.6L16.4 17.8L15.1 18.3L14.7 21.3L11.3 21.3L10.9 18.3L9.6 17.8L7.2 19.6L4.8 17.2L6.6 14.8L6.1 13.5L3.1 13.1L3.1 9.7L6.1 9.3L6.6 8.0L4.8 5.6L7.2 3.2L9.6 5.0L10.9 4.5L11.3 1.5L14.7 1.5L15.1 4.5L16.4 5.0L18.8 3.2L21.2 5.6L19.4 8.0L19.9 9.3Z" fill="none" stroke="#d88020" stroke-width="0.6" transform="translate(0.6 0.8)" opacity="0.7"/><rect x="10.6" y="5.5" width="4.8" height="9.5" rx="1" fill="#888" stroke="#222" stroke-width="1"/><rect x="11.4" y="6.3" width="3.2" height="4" fill="#ddd"/></svg>
<svg class="ti" style="left:840px;top:20px" width="5" height="5" viewBox="0 0 5 5"><path d="M5 0 L5 5 L0 5Z" fill="#fff"/><path d="M5 -0.4 L-0.4 5" stroke="#777" stroke-width="0.7" fill="none"/></svg>
<svg class="ti" style="left:848px;top:2px" width="24" height="24" viewBox="0 0 24 24"><path d="M3 3.5H11M3 13.5H11M6.5 4V13M12.5 14V23M22.5 14V21M13 20.5H22" stroke="#000" stroke-width="1.2" fill="none"/><path d="M6.5 3.8L4.3 7H8.7ZM6.5 13.2L4.3 10H8.7ZM12.8 20.5L16 18.4V22.6ZM22.2 20.5L19 18.4V22.6Z" fill="#000"/><rect x="10.8" y="1.8" width="3.4" height="3.4" fill="#fff" stroke="#000" stroke-width="1.1"/><rect x="10.8" y="11.8" width="3.4" height="3.4" fill="#fff" stroke="#000" stroke-width="1.1"/><rect x="20.8" y="11.8" width="3.4" height="3.4" fill="#fff" stroke="#000" stroke-width="1.1"/></svg>
<svg class="ti" style="left:868px;top:20px" width="5" height="5" viewBox="0 0 5 5"><path d="M5 0 L5 5 L0 5Z" fill="#fff"/><path d="M5 -0.4 L-0.4 5" stroke="#777" stroke-width="0.7" fill="none"/></svg>
<svg class="ti" style="left:876px;top:2px" width="24" height="24" viewBox="0 0 24 24"><circle cx="12.8" cy="11.8" r="9.6" fill="url(#gHelp)"/><text x="12.8" y="18.6" font-family="Liberation Serif,serif" font-weight="bold" font-size="19" fill="#fff" text-anchor="middle">?</text></svg>
<svg class="ti" style="left:896px;top:20px" width="5" height="5" viewBox="0 0 5 5"><path d="M5 0 L5 5 L0 5Z" fill="#fff"/><path d="M5 -0.4 L-0.4 5" stroke="#777" stroke-width="0.7" fill="none"/></svg>
</div>
<div id="lefttb"><div class="lc lc1"><div class="lgrip"></div></div><div class="lsep"></div><div class="lc lc2"><div class="lgrip"></div></div>
<svg class="ti" style="left:3px;top:11px" width="24" height="24" viewBox="0 0 24 24"><path d="M7.2 5.2V18.8L10.6 15.6L13 21L15.6 19.9L13.2 14.6H17.4Z" fill="#fff" stroke="#000" stroke-width="1.4" stroke-linejoin="miter"/></svg>
<svg class="ti" style="left:31px;top:11px" width="24" height="24" viewBox="0 0 24 24"><circle cx="12.4" cy="11.5" r="2" fill="#fff" stroke="#000" stroke-width="1.1"/></svg>
<svg class="ti" style="left:51px;top:30px" width="5" height="5" viewBox="0 0 5 5"><path d="M5 0 L5 5 L0 5Z" fill="#fff"/><path d="M5 -0.4 L-0.4 5" stroke="#777" stroke-width="0.7" fill="none"/></svg>
<svg class="ti" style="left:3px;top:39px" width="24" height="24" viewBox="0 0 24 24"><path d="M4.9 19L10 6L19 16" fill="none" stroke="#000" stroke-width="1.1"/><rect x="3.3" y="17.4" width="3.2" height="3.2" fill="#fff" stroke="#000" stroke-width="1.1"/><rect x="8.4" y="4.4" width="3.2" height="3.2" fill="#fff" stroke="#000" stroke-width="1.1"/><rect x="17.4" y="14.4" width="3.2" height="3.2" fill="#fff" stroke="#000" stroke-width="1.1"/></svg>
<svg class="ti" style="left:22px;top:58px" width="5" height="5" viewBox="0 0 5 5"><path d="M5 0 L5 5 L0 5Z" fill="#fff"/><path d="M5 -0.4 L-0.4 5" stroke="#777" stroke-width="0.7" fill="none"/></svg>
<svg class="ti" style="left:31px;top:39px" width="24" height="24" viewBox="0 0 24 24"><path d="M4.9 6C12 3.5 20 5 19.5 12.5C19 19 11 19 4.9 18.1" fill="none" stroke="#000" stroke-width="1.1"/><rect x="3.3" y="4.4" width="3.2" height="3.2" fill="#fff" stroke="#000" stroke-width="1.1"/><rect x="17.4" y="1.2" width="3.2" height="3.2" fill="#fff" stroke="#000" stroke-width="1.1"/><rect x="3.3" y="16.5" width="3.2" height="3.2" fill="#fff" stroke="#000" stroke-width="1.1"/><rect x="19.4" y="18.6" width="3.2" height="3.2" fill="#fff" stroke="#000" stroke-width="1.1"/></svg>
<svg class="ti" style="left:51px;top:58px" width="5" height="5" viewBox="0 0 5 5"><path d="M5 0 L5 5 L0 5Z" fill="#fff"/><path d="M5 -0.4 L-0.4 5" stroke="#777" stroke-width="0.7" fill="none"/></svg>
<svg class="ti" style="left:3px;top:67px" width="24" height="24" viewBox="0 0 24 24"><circle cx="11.5" cy="11.4" r="9" fill="none" stroke="#000" stroke-width="1.1"/><path d="M12 11.1L18 5" stroke="#000" stroke-width="0.9"/><rect x="10.4" y="9.5" width="3.2" height="3.2" fill="#fff" stroke="#000" stroke-width="1.1"/><rect x="16.4" y="3.4" width="3.2" height="3.2" fill="#fff" stroke="#000" stroke-width="1.1"/></svg>
<svg class="ti" style="left:22px;top:86px" width="5" height="5" viewBox="0 0 5 5"><path d="M5 0 L5 5 L0 5Z" fill="#fff"/><path d="M5 -0.4 L-0.4 5" stroke="#777" stroke-width="0.7" fill="none"/></svg>
<svg class="ti" style="left:31px;top:67px" width="24" height="24" viewBox="0 0 24 24"><ellipse cx="12.8" cy="11.7" rx="9.4" ry="6.9" fill="none" stroke="#000" stroke-width="1.1"/><path d="M12.8 5V12H22" stroke="#000" stroke-width="0.9" fill="none"/><rect x="11.2" y="3.4" width="3.2" height="3.2" fill="#fff" stroke="#000" stroke-width="1.1"/><rect x="11.2" y="10.4" width="3.2" height="3.2" fill="#fff" stroke="#000" stroke-width="1.1"/><rect x="20.4" y="10.4" width="3.2" height="3.2" fill="#fff" stroke="#000" stroke-width="1.1"/></svg>
<svg class="ti" style="left:51px;top:86px" width="5" height="5" viewBox="0 0 5 5"><path d="M5 0 L5 5 L0 5Z" fill="#fff"/><path d="M5 -0.4 L-0.4 5" stroke="#777" stroke-width="0.7" fill="none"/></svg>
<svg class="ti" style="left:3px;top:95px" width="24" height="24" viewBox="0 0 24 24"><path d="M6 4C12 4.5 17.5 8 20 12" fill="none" stroke="#000" stroke-width="1.1"/><path d="M6 4V20.2L20 12" fill="none" stroke="#000" stroke-width="0.8"/><rect x="4.4" y="2.4" width="3.2" height="3.2" fill="#fff" stroke="#000" stroke-width="1.1"/><rect x="18.4" y="10.4" width="3.2" height="3.2" fill="#fff" stroke="#000" stroke-width="1.1"/><rect x="4.4" y="18.6" width="3.2" height="3.2" fill="#fff" stroke="#000" stroke-width="1.1"/></svg>
<svg class="ti" style="left:22px;top:114px" width="5" height="5" viewBox="0 0 5 5"><path d="M5 0 L5 5 L0 5Z" fill="#fff"/><path d="M5 -0.4 L-0.4 5" stroke="#777" stroke-width="0.7" fill="none"/></svg>
<svg class="ti" style="left:31px;top:95px" width="24" height="24" viewBox="0 0 24 24"><rect x="4.7" y="6.5" width="16.8" height="10.8" fill="none" stroke="#000" stroke-width="1.3"/><rect x="19.9" y="5.2" width="3.2" height="3.2" fill="#fff" stroke="#000" stroke-width="1.1"/><rect x="3.3" y="15.4" width="3.2" height="3.2" fill="#fff" stroke="#000" stroke-width="1.1"/></svg>
<svg class="ti" style="left:51px;top:114px" width="5" height="5" viewBox="0 0 5 5"><path d="M5 0 L5 5 L0 5Z" fill="#fff"/><path d="M5 -0.4 L-0.4 5" stroke="#777" stroke-width="0.7" fill="none"/></svg>
<svg class="ti" style="left:3px;top:123px" width="24" height="24" viewBox="0 0 24 24"><path d="M3.4 11.2L7.4 4.5H16.2L20 11.2L16.2 18H7.4Z" fill="none" stroke="#000" stroke-width="1.1"/><path d="M12 11.2H20" stroke="#000" stroke-width="0.9"/><rect x="10.4" y="9.6" width="3.2" height="3.2" fill="#fff" stroke="#000" stroke-width="1.1"/><rect x="18.4" y="9.6" width="3.2" height="3.2" fill="#fff" stroke="#000" stroke-width="1.1"/></svg>
<svg class="ti" style="left:22px;top:142px" width="5" height="5" viewBox="0 0 5 5"><path d="M5 0 L5 5 L0 5Z" fill="#fff"/><path d="M5 -0.4 L-0.4 5" stroke="#777" stroke-width="0.7" fill="none"/></svg>
<svg class="ti" style="left:31px;top:123px" width="24" height="24" viewBox="0 0 24 24"><path d="M4.9 5H21V20" fill="none" stroke="#777" stroke-width="0.8"/><path d="M4.9 5H10C17 5 21 9 21 16V20" fill="none" stroke="#000" stroke-width="2.2"/><rect x="3.3" y="3.4" width="3.2" height="3.2" fill="#fff" stroke="#000" stroke-width="1.1"/><rect x="19.4" y="18.4" width="3.2" height="3.2" fill="#fff" stroke="#000" stroke-width="1.1"/></svg>
<svg class="ti" style="left:51px;top:142px" width="5" height="5" viewBox="0 0 5 5"><path d="M5 0 L5 5 L0 5Z" fill="#fff"/><path d="M5 -0.4 L-0.4 5" stroke="#777" stroke-width="0.7" fill="none"/></svg>
<svg class="ti" style="left:3px;top:151px" width="24" height="24" viewBox="0 0 24 24"><path d="M8 3.9H20L15.1 20.2L4 15Z" fill="url(#gBlue)" stroke="#000" stroke-width="1.2"/><path d="M14 3.9L9.5 17.6M6 9.5L17.5 12" stroke="#203080" stroke-width="0.9" fill="none"/><rect x="6.4" y="2.3" width="3.2" height="3.2" fill="#fff" stroke="#000" stroke-width="1.1"/><rect x="18.4" y="2.3" width="3.2" height="3.2" fill="#fff" stroke="#000" stroke-width="1.1"/><rect x="13.5" y="18.6" width="3.2" height="3.2" fill="#fff" stroke="#000" stroke-width="1.1"/><rect x="2.4" y="13.4" width="3.2" height="3.2" fill="#fff" stroke="#000" stroke-width="1.1"/></svg>
<svg class="ti" style="left:22px;top:170px" width="5" height="5" viewBox="0 0 5 5"><path d="M5 0 L5 5 L0 5Z" fill="#fff"/><path d="M5 -0.4 L-0.4 5" stroke="#777" stroke-width="0.7" fill="none"/></svg>
<svg class="ti" style="left:31px;top:151px" width="24" height="24" viewBox="0 0 24 24"><path d="M2.5 7.5L9 2.5L14 4.5L7.5 9.5Z" fill="#fff" stroke="#000" stroke-width="1"/><path d="M7.5 9.5L14 4.5C18 5.5 20.5 9 20.5 12.5L14.5 17C14.5 13.5 12 10.5 7.5 9.5Z" fill="url(#gBlue)" stroke="#000" stroke-width="1"/><path d="M14.5 17L20.5 12.5V17.5L14.5 22Z" fill="#fff" stroke="#000" stroke-width="1"/></svg>
<svg class="ti" style="left:51px;top:170px" width="5" height="5" viewBox="0 0 5 5"><path d="M5 0 L5 5 L0 5Z" fill="#fff"/><path d="M5 -0.4 L-0.4 5" stroke="#777" stroke-width="0.7" fill="none"/></svg>
<svg class="ti" style="left:3px;top:179px" width="24" height="24" viewBox="0 0 24 24"><path d="M11.4 3.2L19.7 6.4V15.5L12.9 21.3L3.4 18.5V8.3Z" fill="#6484ea" stroke="#000" stroke-width="1.3" stroke-linejoin="round"/><path d="M3.4 8.3L12.9 11.7V21.3L3.4 18.5Z" fill="#5878e4"/><path d="M12.9 11.7L19.7 6.4V15.5L12.9 21.3Z" fill="#3c5ccc"/><path d="M11.4 3.2L19.7 6.4L12.9 11.7L3.4 8.3Z" fill="#7c9af4"/><path d="M11.4 3.2L19.7 6.4V15.5L12.9 21.3L3.4 18.5V8.3Z" fill="none" stroke="#000" stroke-width="1.3" stroke-linejoin="round"/></svg>
<svg class="ti" style="left:22px;top:198px" width="5" height="5" viewBox="0 0 5 5"><path d="M5 0 L5 5 L0 5Z" fill="#fff"/><path d="M5 -0.4 L-0.4 5" stroke="#777" stroke-width="0.7" fill="none"/></svg>
<svg class="ti" style="left:31px;top:179px" width="24" height="24" viewBox="0 0 24 24"><circle cx="9.4" cy="15.5" r="7" fill="url(#gBS)" stroke="#0a1440" stroke-width="1.3"/><path d="M2.4000000000000004 15.5C6.4 18.5 12.4 18.5 16.4 15.5" fill="none" stroke="#0a1440" stroke-width="0.9"/><path d="M8.4 8.5C5.4 13.5 5.4 17.5 8.4 22.5" fill="none" stroke="#0a1440" stroke-width="0.9"/><circle cx="16.6" cy="8.3" r="7" fill="url(#gBS)" stroke="#0a1440" stroke-width="1.3"/><path d="M9.600000000000001 8.3C13.600000000000001 11.3 19.6 11.3 23.6 8.3" fill="none" stroke="#0a1440" stroke-width="0.9"/><path d="M15.600000000000001 1.3000000000000007C12.600000000000001 6.300000000000001 12.600000000000001 10.3 15.600000000000001 15.3" fill="none" stroke="#0a1440" stroke-width="0.9"/></svg>
<svg class="ti" style="left:51px;top:198px" width="5" height="5" viewBox="0 0 5 5"><path d="M5 0 L5 5 L0 5Z" fill="#fff"/><path d="M5 -0.4 L-0.4 5" stroke="#777" stroke-width="0.7" fill="none"/></svg>
<svg class="ti" style="left:3px;top:207px" width="24" height="24" viewBox="0 0 24 24"><ellipse cx="12" cy="3.9" rx="5.4" ry="2.4" fill="none" stroke="#000" stroke-width="1.2"/><path d="M1.5 9.5C8 13 16 13 23 9.5V19C16 23.5 8 23.5 1.5 19Z" fill="#6484ea" stroke="#000" stroke-width="1.3" stroke-linejoin="round"/><ellipse cx="12" cy="17.6" rx="5.6" ry="2.5" fill="#90a8f4" stroke="#fff" stroke-width="1.5"/></svg>
<svg class="ti" style="left:22px;top:226px" width="5" height="5" viewBox="0 0 5 5"><path d="M5 0 L5 5 L0 5Z" fill="#fff"/><path d="M5 -0.4 L-0.4 5" stroke="#777" stroke-width="0.7" fill="none"/></svg>
<svg class="ti" style="left:31px;top:207px" width="24" height="24" viewBox="0 0 24 24"><path d="M11.7 2.2C15 5.5 19 4.5 23.5 6.4C19 10 19 17 14.3 21.5C11 18.5 6.5 19.5 2.2 17C7.5 12.5 7.5 7 11.7 2.2Z" fill="url(#gBlue)" stroke="#0a1440" stroke-width="1.3"/><path d="M7.8 9.2C11.5 11.5 15.5 10.5 20 12.5M5 13.5C9 15.5 13 15 17.5 17M15.6 4.2C12.5 9 12 14 8.5 19M19.5 5C16.5 10 16 16 12 20" fill="none" stroke="#0a1440" stroke-width="0.8"/></svg>
<svg class="ti" style="left:51px;top:226px" width="5" height="5" viewBox="0 0 5 5"><path d="M5 0 L5 5 L0 5Z" fill="#fff"/><path d="M5 -0.4 L-0.4 5" stroke="#777" stroke-width="0.7" fill="none"/></svg>
<svg class="ti" style="left:3px;top:235px" width="24" height="24" viewBox="0 0 24 24"><g transform="translate(6.8 1.2) rotate(22) scale(1.0)"><path d="M0 3.2H3.2C2.2 1.2 3 0 4.6 0C6.2 0 7 1.2 6 3.2H9.2V6.4C11.2 5.4 12.4 6.2 12.4 7.8C12.4 9.4 11.2 10.2 9.2 9.2V12.4H6C7 10.4 6.2 9.2 4.6 9.2C3 9.2 2.2 10.4 3.2 12.4H0V9.2C-2 10.2 -3.2 9.4 -3.2 7.8C-3.2 6.2 -2 5.4 0 6.4Z" fill="#ffb000" stroke="#000" stroke-width="0.9"/></g><g transform="translate(14.6 9.2) rotate(22) scale(1.0)"><path d="M0 3.2H3.2C2.2 1.2 3 0 4.6 0C6.2 0 7 1.2 6 3.2H9.2V6.4C11.2 5.4 12.4 6.2 12.4 7.8C12.4 9.4 11.2 10.2 9.2 9.2V12.4H6C7 10.4 6.2 9.2 4.6 9.2C3 9.2 2.2 10.4 3.2 12.4H0V9.2C-2 10.2 -3.2 9.4 -3.2 7.8C-3.2 6.2 -2 5.4 0 6.4Z" fill="#fff" stroke="#000" stroke-width="0.9"/></g></svg>
<svg class="ti" style="left:31px;top:235px" width="24" height="24" viewBox="0 0 24 24"><path d="M1.2 23.2V12L5.6 3.8L6 17.4L18.8 3.8L13.6 17.6L23 18.5L13.8 22.6L15 23.2Z" fill="url(#gExp)"/><path d="M1.2 12L5.6 3.8L6 17.4L18.8 3.8L13.6 17.6L23 18.5L13.8 22.6" fill="none" stroke="#000" stroke-width="1.1" stroke-linejoin="miter"/></svg>
<svg class="ti" style="left:3px;top:263px" width="24" height="24" viewBox="0 0 24 24"><rect x="1.5" y="10.5" width="10" height="5" fill="#fff" stroke="#000" stroke-width="1.3"/><path d="M12 14.5L15.2 11.5L22.6 18.5L19.4 21.8Z" fill="#fff" stroke="#000" stroke-width="1.2"/><path d="M11 1.9H17.8L12.2 14.5H11Z" fill="#2040a0"/></svg>
<svg class="ti" style="left:31px;top:263px" width="24" height="24" viewBox="0 0 24 24"><rect x="3.6" y="11.5" width="17.8" height="5" fill="#fff" stroke="#000" stroke-width="1.3"/><path d="M13.2 3.4H19.8L14.2 16.4H13.2Z" fill="#2040a0"/></svg>
<svg class="ti" style="left:3px;top:291px" width="24" height="24" viewBox="0 0 24 24"><circle cx="12" cy="8.7" r="4.3" fill="#a4a4fa" stroke="#000" stroke-width="2"/><circle cx="8.7" cy="14.4" r="4" fill="#fff" stroke="#000" stroke-width="2"/><circle cx="15.6" cy="14.4" r="4" fill="#2a2a92" stroke="#000" stroke-width="2"/><circle cx="12" cy="8.9" r="3.3" fill="#a4a4fa"/></svg>
<svg class="ti" style="left:22px;top:310px" width="5" height="5" viewBox="0 0 5 5"><path d="M5 0 L5 5 L0 5Z" fill="#fff"/><path d="M5 -0.4 L-0.4 5" stroke="#777" stroke-width="0.7" fill="none"/></svg>
<svg class="ti" style="left:31px;top:291px" width="24" height="24" viewBox="0 0 24 24"><circle cx="13.2" cy="8" r="3.4" fill="#a4a4fa" stroke="#1a1a70" stroke-width="1.2"/><circle cx="7.9" cy="16" r="3.4" fill="#fff" stroke="#000" stroke-width="1.2"/><circle cx="18.1" cy="16" r="3.6" fill="#2a2a92" stroke="#1a1a70" stroke-width="0.8"/></svg>
<svg class="ti" style="left:3px;top:319px" width="24" height="24" viewBox="0 0 24 24"><path d="M1.5 8C9 5 16.5 9 16.6 22.2" fill="none" stroke="#000" stroke-width="2.2"/><rect x="5.3" y="5.1" width="3.4" height="3.4" fill="#fff" stroke="#000" stroke-width="1.1"/><rect x="15.3" y="15.3" width="3.4" height="3.4" fill="#fff" stroke="#000" stroke-width="1.1"/></svg>
<svg class="ti" style="left:31px;top:319px" width="24" height="24" viewBox="0 0 24 24"><path d="M2.6 8C10 6 17.7 10 17.7 21.9" fill="none" stroke="#000" stroke-width="2.4"/><path d="M2 3.4H10L22 15V22" fill="none" stroke="#000" stroke-width="1.2" stroke-dasharray="1.2 1.3"/><rect x="8.2" y="1.4" width="3.6" height="3.6" fill="#fff" stroke="#000" stroke-width="1.1"/><rect x="20.2" y="13.2" width="3.6" height="3.6" fill="#fff" stroke="#000" stroke-width="1.1"/></svg>
<svg class="ti" style="left:51px;top:338px" width="5" height="5" viewBox="0 0 5 5"><path d="M5 0 L5 5 L0 5Z" fill="#fff"/><path d="M5 -0.4 L-0.4 5" stroke="#777" stroke-width="0.7" fill="none"/></svg>
<svg class="ti" style="left:3px;top:347px" width="24" height="24" viewBox="0 0 24 24"><path d="M4.5 1.5L19.5 6.5V12L17.5 11.5C17 9.5 16 8.5 14 8L13.5 18.5L16.5 20V22.5L7 19.5V17L9.5 17.5L10 6.8C8 6.5 6.5 6.8 5.5 8L3.2 7Z" fill="#6484ea" stroke="#0a1440" stroke-width="1.2" stroke-linejoin="round"/><path d="M5 2.5L18.5 7" stroke="#a8bcfa" stroke-width="1"/></svg>
<svg class="ti" style="left:31px;top:347px" width="24" height="24" viewBox="0 0 24 24"><rect x="4.7" y="14.8" width="5.8" height="5.6" fill="url(#gDoc)" stroke="#000" stroke-width="1.4"/><rect x="16.6" y="2.5" width="6" height="6" fill="url(#gBlue)" stroke="#000" stroke-width="1.4"/><path d="M10.5 14.5L15.5 9.5" stroke="#000" stroke-width="1.2"/><path d="M16.3 8.7L12.8 9.6L15.4 12.2Z" fill="#000"/></svg>
<svg class="ti" style="left:51px;top:366px" width="5" height="5" viewBox="0 0 5 5"><path d="M5 0 L5 5 L0 5Z" fill="#fff"/><path d="M5 -0.4 L-0.4 5" stroke="#777" stroke-width="0.7" fill="none"/></svg>
<svg class="ti" style="left:3px;top:375px" width="24" height="24" viewBox="0 0 24 24"><rect x="3.6" y="2.8" width="6" height="6" fill="url(#gBlue)" stroke="#000" stroke-width="1.4"/><rect x="15.3" y="5.6" width="6" height="6" fill="url(#gBlue)" stroke="#000" stroke-width="1.4"/><rect x="11.6" y="9" width="6" height="6" fill="url(#gBlue)" stroke="#000" stroke-width="1.4"/><rect x="3.6" y="15" width="6" height="6" fill="url(#gDoc)" stroke="#000" stroke-width="1.4"/><rect x="15.6" y="16.8" width="6" height="6" fill="url(#gBlue)" stroke="#000" stroke-width="1.4"/></svg>
<svg class="ti" style="left:31px;top:375px" width="24" height="24" viewBox="0 0 24 24"><rect x="2.6" y="3.6" width="5.3" height="13.6" fill="#fff" stroke="#000" stroke-width="1.4"/><rect x="9.5" y="12.6" width="14.5" height="5" fill="#6484ea" stroke="#000" stroke-width="1.3" transform="rotate(-40 16.7 15.1)"/><path d="M8 5.5C11 5.5 13 6.5 14.5 8.5" fill="none" stroke="#000" stroke-width="1.2"/><path d="M15.8 10L12.6 9.2L15.2 6.6Z" fill="#000"/></svg>
<svg class="ti" style="left:3px;top:403px" width="24" height="24" viewBox="0 0 24 24"><path d="M10.6 1.5L21.5 4.9V15.8L13.6 22.2L2.3 18.8V7.1Z" fill="#5878e4" stroke="#000" stroke-width="1.3" stroke-linejoin="round"/><path d="M10.6 1.5L21.5 4.9L13.6 10.5L2.3 7.1Z" fill="#7c9af4"/><path d="M13.6 10.5L21.5 4.9V15.8L13.6 22.2Z" fill="#3c5ccc"/><path d="M8.3 14.5L13.6 16L17.4 13V18.8L13.6 22L8.3 20.4Z" fill="#fff" stroke="#000" stroke-width="1"/><path d="M13.6 16V22" stroke="#999" stroke-width="0.7"/><path d="M10.6 1.5L21.5 4.9V15.8L13.6 22.2L2.3 18.8V7.1Z" fill="none" stroke="#000" stroke-width="1.3" stroke-linejoin="round"/></svg>
<svg class="ti" style="left:22px;top:422px" width="5" height="5" viewBox="0 0 5 5"><path d="M5 0 L5 5 L0 5Z" fill="#fff"/><path d="M5 -0.4 L-0.4 5" stroke="#777" stroke-width="0.7" fill="none"/></svg>
<svg class="ti" style="left:31px;top:403px" width="24" height="24" viewBox="0 0 24 24"><path d="M2.6 20.3L6 15.4H23.4L19.2 20.3Z" fill="#6484ea"/><path d="M2.6 20.3H19.2L23.4 15.4" fill="none" stroke="#000" stroke-width="1.4"/><path d="M2.6 20.3L6 15.4H23.4" fill="none" stroke="#000" stroke-width="1.2" stroke-dasharray="2.5 1.5"/><path d="M6.8 18V8M13 18V8M19 18V8" stroke="#fff" stroke-width="1.6"/><path d="M6.8 5L4.6 9H9ZM13 5L10.8 9H15.2ZM19 5L16.8 9H21.2Z" fill="#fff"/></svg>
<svg class="ti" style="left:51px;top:422px" width="5" height="5" viewBox="0 0 5 5"><path d="M5 0 L5 5 L0 5Z" fill="#fff"/><path d="M5 -0.4 L-0.4 5" stroke="#777" stroke-width="0.7" fill="none"/></svg>
</div>
<div id="vp"><svg width="942" height="606" viewBox="58 118 942 606" shape-rendering="crispEdges">
<rect x="58" y="118" width="942" height="606" fill="#a0a0a0"/><rect x="58" y="309" width="942" height="415" fill="#9d9d9d"/>
<path d="M61 309V724M64 309V724M67 309V724M70 309V724M73 309V724M76 309V724M82 309V724M85 309V724M88 309V724M91 309V724M94 309V724M97 309V724M100 309V724M103 309V724M106 309V724M112 309V724M115 309V724M118 309V724M121 309V724M124 309V724M127 309V724M130 309V724M133 309V724M136 309V724M142 309V724M145 309V724M148 309V724M151 309V724M154 309V724M157 309V724M160 309V724M163 309V724M166 309V724M172 309V724M175 309V724M178 309V724M181 309V724M185 309V724M188 309V724M191 309V724M194 309V724M197 309V724M203 309V724M206 309V724M209 309V724M212 309V724M215 309V724M218 309V724M221 309V724M224 309V724M227 309V724M233 309V724M236 309V724M239 309V724M242 309V724M245 309V724M248 309V724M251 309V724M254 309V724M257 309V724M263 309V724M266 309V724M269 309V724M272 309V724M275 309V724M278 309V724M281 309V724M284 309V724M287 309V724M293 309V724M296 309V724M299 309V724M302 309V724M305 309V724M308 309V724M311 309V724M314 309V724M317 309V724M323 309V724M326 309V724M329 309V724M332 309V724M335 309V724M338 309V724M341 309V724M344 309V724M347 309V724M353 309V724M356 309V724M359 309V724M362 309V724M365 309V724M368 309V724M371 309V724M374 309V724M377 309V724M383 309V724M386 309V724M389 309V724M392 309V724M395 309V724M398 309V724M401 309V724M404 309V724M407 309V724M413 309V724M417 309V724M420 309V724M423 309V724M426 309V724M429 309V724M432 309V724M435 309V724M438 309V724M444 309V724M447 309V724M450 309V724M453 309V724M456 309V724M459 309V724M462 309V724M465 309V724M468 309V724M474 309V724M477 309V724M480 309V724M483 309V724M486 309V724M489 309V724M492 309V724M495 309V724M498 309V724M504 309V724M507 309V724M510 309V724M513 309V724M516 309V724M519 309V724M522 309V724M525 309V724M528 309V724M534 309V724M537 309V724M540 309V724M543 309V724M546 309V724M549 309V724M552 309V724M555 309V724M558 309V724M564 309V724M567 309V724M570 309V724M573 309V724M576 309V724M579 309V724M582 309V724M585 309V724M588 309V724M594 309V724M597 309V724M600 309V724M603 309V724M606 309V724M609 309V724M612 309V724M615 309V724M618 309V724M624 309V724M627 309V724M630 309V724M633 309V724M636 309V724M639 309V724M642 309V724M645 309V724M649 309V724M655 309V724M658 309V724M661 309V724M664 309V724M667 309V724M670 309V724M673 309V724M676 309V724M679 309V724M685 309V724M688 309V724M691 309V724M694 309V724M697 309V724M700 309V724M703 309V724M706 309V724M709 309V724M715 309V724M718 309V724M721 309V724M724 309V724M727 309V724M730 309V724M733 309V724M736 309V724M739 309V724M745 309V724M748 309V724M751 309V724M754 309V724M757 309V724M760 309V724M763 309V724M766 309V724M769 309V724M775 309V724M778 309V724M781 309V724M784 309V724M787 309V724M790 309V724M793 309V724M796 309V724M799 309V724M805 309V724M808 309V724M811 309V724M814 309V724M817 309V724M820 309V724M823 309V724M826 309V724M829 309V724M835 309V724M838 309V724M841 309V724M844 309V724M847 309V724M850 309V724M853 309V724M856 309V724M859 309V724M865 309V724M868 309V724M871 309V724M874 309V724M877 309V724M881 309V724M884 309V724M887 309V724M890 309V724M896 309V724M899 309V724M902 309V724M905 309V724M908 309V724M911 309V724M914 309V724M917 309V724M920 309V724M926 309V724M929 309V724M932 309V724M935 309V724M938 309V724M941 309V724M944 309V724M947 309V724M950 309V724M956 309V724M959 309V724M962 309V724M965 309V724M968 309V724M971 309V724M974 309V724M977 309V724M980 309V724M986 309V724M989 309V724M992 309V724M995 309V724M998 309V724M58 312H1000M58 315H1000M58 318H1000M58 321H1000M58 324H1000M58 327H1000M58 330H1000M58 333H1000M58 336H1000M58 342H1000M58 345H1000M58 348H1000M58 351H1000M58 354H1000M58 357H1000M58 360H1000M58 363H1000M58 366H1000M58 372H1000M58 375H1000M58 378H1000M58 381H1000M58 384H1000M58 387H1000M58 390H1000M58 393H1000M58 396H1000M58 402H1000M58 405H1000M58 408H1000M58 411H1000M58 414H1000M58 417H1000M58 420H1000M58 423H1000M58 427H1000M58 433H1000M58 436H1000M58 439H1000M58 442H1000M58 445H1000M58 448H1000M58 451H1000M58 454H1000M58 457H1000M58 463H1000M58 466H1000M58 469H1000M58 472H1000M58 475H1000M58 478H1000M58 481H1000M58 484H1000M58 487H1000M58 493H1000M58 496H1000M58 499H1000M58 502H1000M58 505H1000M58 508H1000M58 511H1000M58 514H1000M58 517H1000M58 523H1000M58 526H1000M58 529H1000M58 532H1000M58 535H1000M58 538H1000M58 541H1000M58 544H1000M58 547H1000M58 553H1000M58 556H1000M58 559H1000M58 562H1000M58 565H1000M58 568H1000M58 571H1000M58 574H1000M58 577H1000M58 583H1000M58 586H1000M58 589H1000M58 592H1000M58 595H1000M58 598H1000M58 601H1000M58 604H1000M58 607H1000M58 613H1000M58 616H1000M58 619H1000M58 622H1000M58 625H1000M58 628H1000M58 631H1000M58 634H1000M58 637H1000M58 643H1000M58 646H1000M58 649H1000M58 652H1000M58 655H1000M58 659H1000M58 662H1000M58 665H1000M58 668H1000M58 674H1000M58 677H1000M58 680H1000M58 683H1000M58 686H1000M58 689H1000M58 692H1000M58 695H1000M58 698H1000M58 704H1000M58 707H1000M58 710H1000M58 713H1000M58 716H1000M58 719H1000M58 722H1000" stroke="#919191" stroke-width="1" fill="none" transform="translate(0.5,0.5)"/>
<path d="M79 309V724M109 309V724M139 309V724M169 309V724M200 309V724M230 309V724M260 309V724M290 309V724M320 309V724M350 309V724M380 309V724M410 309V724M441 309V724M471 309V724M501 309V724M531 309V724M561 309V724M591 309V724M621 309V724M652 309V724M682 309V724M712 309V724M742 309V724M772 309V724M802 309V724M832 309V724M862 309V724M893 309V724M923 309V724M953 309V724M983 309V724M58 309H1000M58 339H1000M58 369H1000M58 399H1000M58 430H1000M58 460H1000M58 490H1000M58 520H1000M58 550H1000M58 580H1000M58 610H1000M58 640H1000M58 671H1000M58 701H1000" stroke="#858585" stroke-width="1" fill="none" transform="translate(0.5,0.5)"/>
<rect x="530" y="309" width="2" height="415" fill="#4c994c"/>
<path d="M94 658V688H123" stroke="#555" stroke-width="1" fill="none" transform="translate(0.5,0.5)"/>
</svg>
<span class="axl" style="left:39px;top:533px">y</span><span class="axl" style="left:69px;top:563px">x</span>
<svg class="dw" width="942" height="606" viewBox="58 118 942 606" shape-rendering="crispEdges"><g transform="translate(0.5,0.5)" stroke="#000" stroke-width="1" fill="none">
<path d="M346 446L272 446L272 369L359 369L359 639M346 369L346 643L883 643M346 639L511 639M369 400L338 400L338 412L369 412M1000 375L399 375L399 390L369 390L369 420L399 420L399 435L1000 435M369 405L1000 405M503 277L390 277L390 533L503 533L503 440M503 277L503 369M503 286L404 286L404 375M404 435L404 524L503 524M437 286L437 297L503 297M437 512L503 512M437 512L437 524M437 301L503 301M437 301L437 369L511 369M437 508L503 508M437 508L437 440L511 440M434 304L507 304L507 309L434 309L434 315L507 315L507 320L434 320L434 326L508 326L508 330M434 330L511 330M434 506L507 506L507 501L434 501L434 495L507 495L507 489L434 489L434 484L508 484L508 480M435 480L511 480M511 375L511 261L883 261L883 353M511 435L511 643M883 457L883 643M511 340L585 340L585 375M548 340L548 375M585 353L1000 353M852 353L852 323L883 323M511 471L585 471L585 435M548 471L548 435M585 457L1000 457M852 457L852 487L883 487"/>
</g><g stroke="#000" stroke-width="1" fill="none" shape-rendering="crispEdges" transform="translate(0.5,0.5)">
<path d="M511 340L548 375L585 340M511 471L548 435L585 471M852 323L883 353M852 353L883 323M852 457L883 487M852 487L883 457"/>
</g></svg>
<div class="vtitle">Shora</div>
</div>
<div id="props">
<div class="ptitle">Vlastnosti</div><div class="pgripbg" style="left:73px;width:68px"></div><div class="pgrip" style="left:66px;width:74px"></div><div class="pclose" style="left:143px"><svg width="7" height="7" viewBox="0 0 7 7"><path d="M0.8 0.8L6.2 6.2M6.2 0.8L0.8 6.2" stroke="#fff" stroke-width="1.9"/></svg></div>
<div class="phead">Pohled</div><div class="pheadline"></div>
<div class="prow" style="top:44px"><span class="pl">Titulek</span><span class="pv">
<span class="pvt">Shora</span>
</span></div>
<div class="prow dis" style="top:63px"><span class="pl">Šířka</span><span class="pv">
<span class="pvt">942</span>
</span></div>
<div class="prow dis" style="top:82px"><span class="pl">Výška</span><span class="pv">
<span class="pvt">606</span>
</span></div>
<div class="prow" style="top:101px"><span class="pl">Promítání</span><span class="pv">
<span class="pvt">Rovno...</span>
<span class="dd"><svg width="9" height="5" viewBox="0 0 9 5"><path d="M0 0H9L4.5 5Z" fill="#000"/></svg></span>
</span></div>
<div class="gname" style="top:122px">Kamera</div>
<div class="prow dis" style="top:142px"><span class="pl">Ohniskov...</span><span class="pv">
<span class="pvt">50.0</span>
</span></div>
<div class="prow" style="top:161px"><span class="pl">Umístění X</span><span class="pv">
<span class="pvt">-0.814</span>
</span></div>
<div class="prow" style="top:180px"><span class="pl">Umístění Y</span><span class="pv">
<span class="pvt">163.091</span>
</span></div>
<div class="prow" style="top:199px"><span class="pl">Umístění Z</span><span class="pv">
<span class="pvt">120.075</span>
</span></div>
<div class="prow" style="top:218px"><span class="pl">Umístění</span><span class="pv">
<span class="pbtn">Umístit...</span>
</span></div>
<div class="gname" style="top:240px">Cíl</div>
<div class="prow" style="top:260px"><span class="pl">Cíl X</span><span class="pv">
<span class="pvt">-0.814</span>
</span></div>
<div class="prow" style="top:279px"><span class="pl">Cíl Y</span><span class="pv">
<span class="pvt">163.091</span>
</span></div>
<div class="prow" style="top:298px"><span class="pl">Cíl Z</span><span class="pv">
<span class="pvt">42.391</span>
</span></div>
<div class="prow" style="top:317px"><span class="pl">Umístění</span><span class="pv">
<span class="pbtn">Umístit...</span>
</span></div>
<div class="gname" style="top:339px">Tapeta</div>
<div class="prow" style="top:359px"><span class="pl">Název so...</span><span class="pv">
<span class="pvt">(žádný)</span>
<span class="pdots">...</span>
</span></div>
<div class="prow" style="top:378px"><span class="pl">Zobrazit</span><span class="pv">
<span class="cb" style="left:4px;top:2px"><svg width="11" height="11" viewBox="0 0 11 11"><path d="M2 5L4.5 8.5L9 1.5" stroke="#3a4a9a" stroke-width="2" fill="none"/></svg></span>
</span></div>
<div class="prow" style="top:397px"><span class="pl">Šedá</span><span class="pv">
<span class="cb" style="left:4px;top:2px"><svg width="11" height="11" viewBox="0 0 11 11"><path d="M2 5L4.5 8.5L9 1.5" stroke="#3a4a9a" stroke-width="2" fill="none"/></svg></span>
</span></div>
</div>
<div id="split"></div>
<div id="layers">
<div class="ptitle" style="left:3px">Vrstvy - Všechny vrstvy</div><div class="pgripbg" style="left:89px;width:97px"></div><div class="pgrip" style="left:128px;width:57px"></div><div class="pclose" style="left:187px"><svg width="7" height="7" viewBox="0 0 7 7"><path d="M0.8 0.8L6.2 6.2M6.2 0.8L0.8 6.2" stroke="#fff" stroke-width="1.9"/></svg></div>
<svg class="ltb" width="201" height="16" viewBox="0 0 201 16"><path d="M6.5 2.5H11L14 5.5V12.5H6.5Z" fill="#fff" stroke="#000" stroke-width="1.1"/><path d="M11 2.5V5.5H14" fill="none" stroke="#000" stroke-width="0.9"/><path d="M26.5 3.5H30L32 5.5V10.5H26.5Z" fill="#f0f0f0" stroke="#9a9a9a"/><path d="M29.5 6.5H33.5L35.5 8.5V13.5H29.5Z" fill="#f0f0f0" stroke="#9a9a9a"/><path d="M48.5 4.5L55.5 11.5M55.5 4.5L48.5 11.5" stroke="#9a9a9a" stroke-width="1.5"/><path d="M68 11L72.5 5.5L77 11Z" fill="#9a9a9a"/><path d="M89 5.5H98L93.5 11Z" fill="#9a9a9a"/><path d="M117.5 4L112 8.5L117.5 13Z" fill="#9a9a9a"/><path d="M131.5 4.5H140.5L137 8.5V12.5H135V8.5Z" fill="#fff" stroke="#000" stroke-width="1.1" stroke-linejoin="round"/><path d="M151.5 12.5L157.5 6.5" stroke="#000" stroke-width="2.4"/><path d="M151.8 12.2L157 7" stroke="#fff" stroke-width="0.8"/><path d="M155 4.5L158 3L162.5 7L160.5 8.5L158.5 6.5L157 7.5Z" fill="#fff" stroke="#000" stroke-width="1"/><text x="178" y="13" font-family="Liberation Sans,sans-serif" font-weight="bold" font-size="12" text-anchor="middle" fill="#000">?</text></svg>
<div class="lbox"><div class="lhdr">
<i class="hsep" style="left:81px"></i>
<i class="hsep" style="left:98px"></i>
<i class="hsep" style="left:115px"></i>
<i class="hsep" style="left:132px"></i>
<i class="hsep" style="left:149px"></i>
<i class="hsep" style="left:166px"></i>
<span class="hl" style="left:7px">Název</span><span class="hl" style="left:172px">Knihovna</span></div>
<div class="lrow cur" style="top:25px"><span class="ln">Default</span>
<svg class="lck" width="11" height="10" viewBox="0 0 11 10"><path d="M0.5 5.5 L2 4 L4 6.5 L9.5 0.5 L10.5 1.5 L4 9.5Z" fill="#000"/></svg>
<i class="sw" style="background:#000"></i><i class="mat cur"></i></div>
<div class="lrow" style="top:42px"><span class="ln">Layer 01</span>
<svg class="lbulb" width="9" height="12" viewBox="0 0 9 12"><path d="M4.5 0.5C2 0.5 0.5 2.2 0.5 4.2C0.5 5.8 2 6.8 2.5 8.5H6.5C7 6.8 8.5 5.8 8.5 4.2C8.5 2.2 7 0.5 4.5 0.5Z" fill="#ffff80" stroke="#8a8a20" stroke-width="0.9"/><rect x="3" y="9" width="3" height="2.5" fill="#444"/></svg>
<svg class="llock" width="12" height="12" viewBox="0 0 12 12"><rect x="0.5" y="5.5" width="7" height="6" fill="#fff" stroke="#000"/><path d="M5.5 5.5V3.5C5.5 1.5 7 0.8 8.3 0.8C9.6 0.8 11 1.5 11 3.5V4.5" fill="none" stroke="#000"/></svg>
<i class="sw" style="background:#ff0000"></i><i class="mat"></i></div>
<div class="lrow" style="top:59px"><span class="ln">Layer 02</span>
<svg class="lbulb" width="9" height="12" viewBox="0 0 9 12"><path d="M4.5 0.5C2 0.5 0.5 2.2 0.5 4.2C0.5 5.8 2 6.8 2.5 8.5H6.5C7 6.8 8.5 5.8 8.5 4.2C8.5 2.2 7 0.5 4.5 0.5Z" fill="#ffff80" stroke="#8a8a20" stroke-width="0.9"/><rect x="3" y="9" width="3" height="2.5" fill="#444"/></svg>
<svg class="llock" width="12" height="12" viewBox="0 0 12 12"><rect x="0.5" y="5.5" width="7" height="6" fill="#fff" stroke="#000"/><path d="M5.5 5.5V3.5C5.5 1.5 7 0.8 8.3 0.8C9.6 0.8 11 1.5 11 3.5V4.5" fill="none" stroke="#000"/></svg>
<i class="sw" style="background:#7d26cd"></i><i class="mat"></i></div>
<div class="lrow" style="top:76px"><span class="ln">Layer 03</span>
<svg class="lbulb" width="9" height="12" viewBox="0 0 9 12"><path d="M4.5 0.5C2 0.5 0.5 2.2 0.5 4.2C0.5 5.8 2 6.8 2.5 8.5H6.5C7 6.8 8.5 5.8 8.5 4.2C8.5 2.2 7 0.5 4.5 0.5Z" fill="#ffff80" stroke="#8a8a20" stroke-width="0.9"/><rect x="3" y="9" width="3" height="2.5" fill="#444"/></svg>
<svg class="llock" width="12" height="12" viewBox="0 0 12 12"><rect x="0.5" y="5.5" width="7" height="6" fill="#fff" stroke="#000"/><path d="M5.5 5.5V3.5C5.5 1.5 7 0.8 8.3 0.8C9.6 0.8 11 1.5 11 3.5V4.5" fill="none" stroke="#000"/></svg>
<i class="sw" style="background:#0000ff"></i><i class="mat"></i></div>
<div class="lrow" style="top:93px"><span class="ln">Layer 04</span>
<svg class="lbulb" width="9" height="12" viewBox="0 0 9 12"><path d="M4.5 0.5C2 0.5 0.5 2.2 0.5 4.2C0.5 5.8 2 6.8 2.5 8.5H6.5C7 6.8 8.5 5.8 8.5 4.2C8.5 2.2 7 0.5 4.5 0.5Z" fill="#ffff80" stroke="#8a8a20" stroke-width="0.9"/><rect x="3" y="9" width="3" height="2.5" fill="#444"/></svg>
<svg class="llock" width="12" height="12" viewBox="0 0 12 12"><rect x="0.5" y="5.5" width="7" height="6" fill="#fff" stroke="#000"/><path d="M5.5 5.5V3.5C5.5 1.5 7 0.8 8.3 0.8C9.6 0.8 11 1.5 11 3.5V4.5" fill="none" stroke="#000"/></svg>
<i class="sw" style="background:#007f00"></i><i class="mat"></i></div>
<div class="lrow" style="top:110px"><span class="ln">Layer 05</span>
<svg class="lbulb" width="9" height="12" viewBox="0 0 9 12"><path d="M4.5 0.5C2 0.5 0.5 2.2 0.5 4.2C0.5 5.8 2 6.8 2.5 8.5H6.5C7 6.8 8.5 5.8 8.5 4.2C8.5 2.2 7 0.5 4.5 0.5Z" fill="#ffff80" stroke="#8a8a20" stroke-width="0.9"/><rect x="3" y="9" width="3" height="2.5" fill="#444"/></svg>
<svg class="llock" width="12" height="12" viewBox="0 0 12 12"><rect x="0.5" y="5.5" width="7" height="6" fill="#fff" stroke="#000"/><path d="M5.5 5.5V3.5C5.5 1.5 7 0.8 8.3 0.8C9.6 0.8 11 1.5 11 3.5V4.5" fill="none" stroke="#000"/></svg>
<i class="sw" style="background:#ffffff"></i><i class="mat"></i></div>
<div class="hscroll"><svg width="197" height="16" viewBox="0 0 197 16"><path d="M10 4L6 7.5L10 11Z" fill="#333"/><path d="M186 4L190 7.5L186 11Z" fill="#333"/><rect x="18.5" y="0.5" width="72" height="15" rx="2" fill="#e6e6e6" stroke="#979797"/><rect x="19.5" y="8" width="70" height="7" fill="#d0d0d0"/><rect x="19.5" y="1.5" width="70" height="1" fill="#f8f8f8"/><path d="M51.5 4V11M54.5 4V11M57.5 4V11" stroke="#444"/></svg></div>
</div></div>
<div id="osnap"><div class="ogrip"></div>
<span class="cb" style="left:11px;top:5px"><svg width="11" height="11" viewBox="0 0 11 11"><path d="M2 5L4.5 8.5L9 1.5" stroke="#3a4a9a" stroke-width="2" fill="none"/></svg></span><span class="ol" style="left:29px">Kon</span>
<span class="cb" style="left:84px;top:5px"></span><span class="ol" style="left:102px">Nej</span>
<span class="cb" style="left:157px;top:5px"></span><span class="ol" style="left:175px">Bod</span>
<span class="cb" style="left:230px;top:5px"><svg width="11" height="11" viewBox="0 0 11 11"><path d="M2 5L4.5 8.5L9 1.5" stroke="#3a4a9a" stroke-width="2" fill="none"/></svg></span><span class="ol" style="left:248px">Pol</span>
<span class="cb" style="left:303px;top:5px"><svg width="11" height="11" viewBox="0 0 11 11"><path d="M2 5L4.5 8.5L9 1.5" stroke="#3a4a9a" stroke-width="2" fill="none"/></svg></span><span class="ol" style="left:321px">Stř</span>
<span class="cb" style="left:376px;top:5px"><svg width="11" height="11" viewBox="0 0 11 11"><path d="M2 5L4.5 8.5L9 1.5" stroke="#3a4a9a" stroke-width="2" fill="none"/></svg></span><span class="ol" style="left:394px">Prů</span>
<span class="cb" style="left:449px;top:5px"></span><span class="ol" style="left:467px">Kol</span>
<span class="cb" style="left:522px;top:5px"></span><span class="ol" style="left:540px">Teč</span>
<span class="cb" style="left:595px;top:5px"></span><span class="ol" style="left:613px">Kva</span>
<span class="cb" style="left:668px;top:5px"></span><span class="ol" style="left:686px">Uzel</span>
<span class="pb" style="left:740px"></span><span class="ol" style="left:759px">Promítnout</span>
<span class="pb on" style="left:813px"></span><span class="ol" style="left:832px">STrack</span>
<span class="pb" style="left:886px"></span><span class="ol" style="left:905px">Zakázat</span>
<div class="oend"></div></div>
<div id="status">
<span class="sp n" style="left:9px">KRov</span><span class="ssep" style="left:44px"></span>
<span class="sp n" style="left:49px">x -77.12</span><span class="sp n" style="left:137px">y 188.97</span><span class="sp n" style="left:225px">z 0.00</span>
<span class="sblk"></span><span class="sp" style="left:416px">Default</span>
<span class="ssep" style="left:569px"></span><span class="sp" style="left:587px">Krok</span><span class="ssep" style="left:627px"></span><span class="sp b" style="left:643px">Orto</span><span class="ssep" style="left:682px"></span><span class="sp" style="left:692px">Rovinný</span><span class="ssep" style="left:740px"></span><span class="sp b" style="left:752px">Uchop</span><span class="ssep" style="left:797px"></span><span class="sp" style="left:820px">Zaznamenávat historii</span><span class="ssep" style="left:955px"></span>
</div><div id="botline"></div>
</body></html>
